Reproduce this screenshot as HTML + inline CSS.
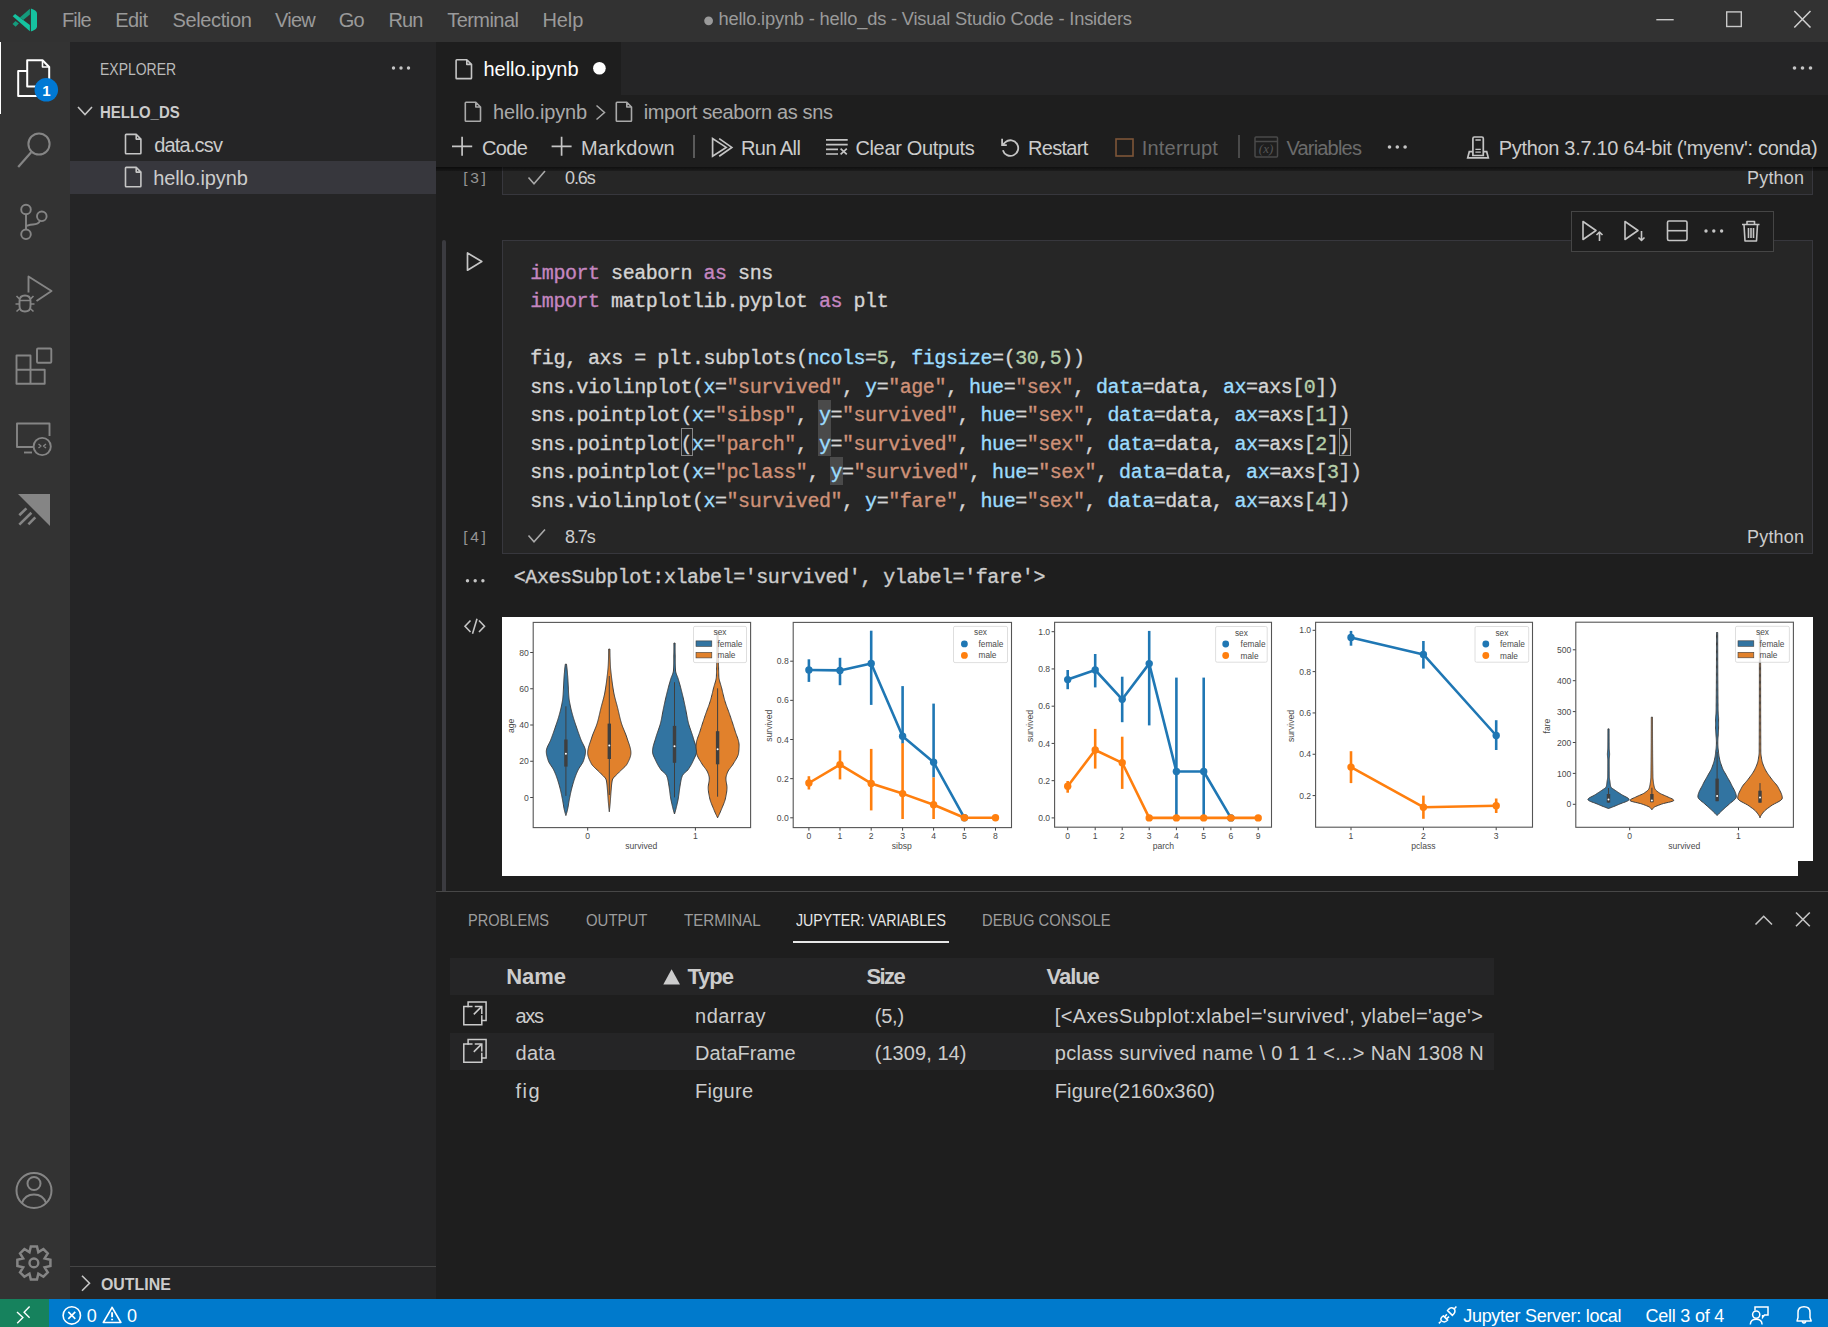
<!DOCTYPE html>
<html><head><meta charset="utf-8">
<style>
*{margin:0;padding:0;box-sizing:border-box}
html,body{width:1828px;height:1327px;overflow:hidden;background:#1e1e1e;font-family:"Liberation Sans",sans-serif;color:#ccc;position:relative}
.a{position:absolute}
.t{position:absolute;white-space:pre;line-height:1}
svg{position:absolute;overflow:visible}
</style></head><body>
<div class="a" style="left:0px;top:0px;width:1828px;height:42px;background:#323232;"></div>
<div class="a" style="left:0px;top:42px;width:70px;height:1257px;background:#333333;"></div>
<div class="a" style="left:70px;top:42px;width:366px;height:1257px;background:#252526;"></div>
<div class="a" style="left:436px;top:42px;width:1392px;height:53px;background:#252526;"></div>
<div class="a" style="left:436px;top:42px;width:185px;height:53px;background:#1e1e1e;"></div>
<div class="a" style="left:436px;top:95px;width:1392px;height:1204px;background:#1e1e1e;"></div>
<div class="a" style="left:0px;top:1299px;width:1828px;height:28px;background:#007acc;"></div>
<div class="a" style="left:0px;top:1299px;width:49px;height:28px;background:#16825d;"></div>
<svg style="left:0;top:0" width="60" height="42" viewBox="0 0 60 42">
<path d="M30.9 8.6 L33.8 9.7 Q37 11.2 37 13.8 L37 26.2 Q37 28.8 33.8 30.3 L30.9 31.5 Z" fill="#15c2a0"/>
<path d="M12.7 16.3 L15.1 13.9 L29.9 25.1 L29.9 31.3 Z" fill="#15c2a0"/>
<path d="M19.8 17.6 L29.9 8.8 L29.9 14.4 L23.2 20 Z" fill="#159a7c"/>
<path d="M12.5 23.9 L15.5 21.1 L18.9 23.6 L15.6 26.7 Z" fill="#159a7c"/>
</svg>
<svg style="left:0;top:0" width="1828" height="42"><circle cx="708.6" cy="20.8" r="4.4" fill="#9a9a9a"/></svg>
<svg style="left:1640px;top:0" width="188" height="42">
<line x1="16.3" y1="19.7" x2="33.7" y2="19.7" stroke="#c8c8c8" stroke-width="1.4"/>
<rect x="86.7" y="11.9" width="14.6" height="14.6" fill="none" stroke="#c8c8c8" stroke-width="1.4"/>
<path d="M154.3 11 L170.5 27.5 M170.5 11 L154.3 27.5" stroke="#d0d0d0" stroke-width="1.5"/>
</svg>
<div class="a" style="left:0px;top:42px;width:1.2px;height:72px;background:#ffffff;"></div>
<svg style="left:0;top:42px" width="70" height="1257" viewBox="0 42 70 1257" fill="none" stroke-linejoin="round">
<!-- files -->
<path d="M27.2 60.2 L42.5 60.2 L49.2 67 L49.2 86.5 L27.2 86.5 Z" stroke="#ffffff" stroke-width="2"/>
<path d="M42.5 60.2 L42.5 67 L49.2 67" stroke="#ffffff" stroke-width="1.6"/>
<path d="M27.2 71 L18.2 71 L18.2 96 L37 96 L37 86.5" stroke="#ffffff" stroke-width="2"/>
<circle cx="46.3" cy="89.8" r="11.8" fill="#0078d4" stroke="none"/>
<!-- search -->
<circle cx="39" cy="144" r="10.6" stroke="#858585" stroke-width="2"/>
<line x1="31.2" y1="152.2" x2="18.2" y2="167" stroke="#858585" stroke-width="2.2"/>
<!-- source control -->
<circle cx="26" cy="209.5" r="4.8" stroke="#858585" stroke-width="1.9"/>
<circle cx="26" cy="234.3" r="4.8" stroke="#858585" stroke-width="1.9"/>
<circle cx="41.8" cy="216.3" r="4.8" stroke="#858585" stroke-width="1.9"/>
<path d="M26 214.3 L26 229.5" stroke="#858585" stroke-width="1.9"/>
<path d="M26 226.5 Q27 225 33 224.5 Q38.5 224 40 220.8" stroke="#858585" stroke-width="1.9"/>
<!-- run & debug -->
<path d="M28.5 292.5 L28.5 276.5 L51.5 291 L36.5 301" stroke="#858585" stroke-width="1.9"/>
<path d="M19.5 301 Q19.5 295.5 25 295.5 Q30.5 295.5 30.5 301 L30.5 306 Q30.5 311.5 25 311.5 Q19.5 311.5 19.5 306 Z" stroke="#858585" stroke-width="1.9"/>
<path d="M19.5 300.5 L30.5 300.5 M16.5 296 L19.5 299 M33.5 296 L30.5 299 M15.5 304 L19.5 304 M34.5 304 L30.5 304 M16.5 311.5 L19.8 308.5 M33.5 311.5 L30.2 308.5" stroke="#858585" stroke-width="1.6"/>
<!-- extensions -->
<path d="M16.5 355.5 L30.5 355.5 L30.5 369.7 L44.7 369.7 L44.7 383.7 L16.5 383.7 Z M16.5 369.7 L30.5 369.7 L30.5 383.7" stroke="#858585" stroke-width="1.9"/>
<rect x="37" y="348.5" width="14.3" height="14.3" rx="1" stroke="#858585" stroke-width="1.9"/>
<!-- remote explorer -->
<path d="M33 447 L17 447 L17 423.5 L49.5 423.5 L49.5 436" stroke="#858585" stroke-width="1.9"/>
<path d="M24 452.5 L32 452.5" stroke="#858585" stroke-width="1.9"/>
<circle cx="42.2" cy="446.5" r="8.6" stroke="#858585" stroke-width="1.9"/>
<path d="M38.5 444 L41 446 L38.5 448 M46 444 L43.5 446 L46 448" stroke="#858585" stroke-width="1.3"/>
<!-- jupyter/other -->
<path d="M18 494 L50 494 L50 526 Z" fill="#858585" stroke="none"/>
<path d="M19.3 515.3 L26.4 508.4 M19.3 524.6 L31.4 512.7 M28.4 524.3 L35.3 517.4" stroke="#858585" stroke-width="2.6"/>
<!-- accounts -->
<circle cx="34" cy="1190.5" r="17.5" stroke="#858585" stroke-width="2"/>
<circle cx="34" cy="1183.5" r="6.5" stroke="#858585" stroke-width="2"/>
<path d="M22 1203 Q25 1194.5 34 1194.5 Q43 1194.5 46 1203" stroke="#858585" stroke-width="2"/>
<!-- settings gear -->
<g transform="translate(34 1263)">
<path d="M-3.2 -17.5 L3.2 -17.5 L4.2 -12.8 L7.9 -11.2 L12 -13.8 L16.5 -9.3 L13.8 -5.2 L15.3 -1.5 L17.5 -0.2 L17.5 5.5 L13.3 6.5 L11.6 10.3 L14.2 14.4 L9.6 18.9 L5.5 16.3 L1.8 17.8 L0.8 22 L-5.5 22" stroke="none"/>
</g>
</svg>
<svg style="left:0;top:0" width="70" height="1327"><path d="M30.84 1246.38 L36.96 1246.38 L38.34 1252.18 L43.42 1249.05 L47.75 1253.38 L44.62 1258.46 L50.42 1259.84 L50.42 1265.96 L44.62 1267.34 L47.75 1272.42 L43.42 1276.75 L38.34 1273.62 L36.96 1279.42 L30.84 1279.42 L29.46 1273.62 L24.38 1276.75 L20.05 1272.42 L23.18 1267.34 L17.38 1265.96 L17.38 1259.84 L23.18 1258.46 L20.05 1253.38 L24.38 1249.05 L29.46 1252.18 Z" fill="none" stroke="#858585" stroke-width="2.5" stroke-linejoin="miter"/><circle cx="33.9" cy="1262.9" r="4.4" fill="none" stroke="#858585" stroke-width="2.4"/></svg>
<svg style="left:0;top:0" width="436" height="1327" fill="#c5c5c5"><circle cx="393.5" cy="68" r="1.7"/><circle cx="401" cy="68" r="1.7"/><circle cx="408.5" cy="68" r="1.7"/></svg>
<svg style="left:0;top:0" width="436" height="1327" fill="none" stroke="#c5c5c5" stroke-width="1.6"><path d="M78 107 L85 114.5 L92 107"/></svg>
<div class="a" style="left:70px;top:161px;width:366px;height:33px;background:#37373d;"></div>
<svg style="left:0;top:0" width="1828" height="1327" fill="none" stroke="#c5c5c5" stroke-width="1.6" stroke-linejoin="round"><path d="M126.2 134.4 L136.2 134.4 L140.89999999999998 139.1 L140.89999999999998 153.1 Q140.89999999999998 153.79999999999998 140.2 153.79999999999998 L126.2 153.79999999999998 Q125.5 153.79999999999998 125.5 153.1 L125.5 135.1 Q125.5 134.4 126.2 134.4 Z M136.2 134.4 L136.2 139.1 L140.89999999999998 139.1"/></svg>
<svg style="left:0;top:0" width="1828" height="1327" fill="none" stroke="#c5c5c5" stroke-width="1.6" stroke-linejoin="round"><path d="M126.2 167.4 L136.2 167.4 L140.89999999999998 172.1 L140.89999999999998 186.1 Q140.89999999999998 186.79999999999998 140.2 186.79999999999998 L126.2 186.79999999999998 Q125.5 186.79999999999998 125.5 186.1 L125.5 168.1 Q125.5 167.4 126.2 167.4 Z M136.2 167.4 L136.2 172.1 L140.89999999999998 172.1"/></svg>
<div class="a" style="left:70px;top:1266px;width:366px;height:1px;background:#454545;"></div>
<svg style="left:0;top:0" width="436" height="1327" fill="none" stroke="#c5c5c5" stroke-width="1.6"><path d="M82 1275.7 L89.5 1283.2 L82 1290.7"/></svg>
<svg style="left:0;top:0" width="1828" height="1327" fill="none" stroke="#c5c5c5" stroke-width="1.6" stroke-linejoin="round"><path d="M456.8 59.699999999999996 L466.8 59.699999999999996 L471.5 64.4 L471.5 77.9 Q471.5 78.60000000000001 470.8 78.60000000000001 L456.8 78.60000000000001 Q456.1 78.60000000000001 456.1 77.9 L456.1 60.4 Q456.1 59.699999999999996 456.8 59.699999999999996 Z M466.8 59.699999999999996 L466.8 64.4 L471.5 64.4"/></svg>
<svg style="left:0;top:0" width="1828" height="100"><circle cx="599.4" cy="68.2" r="6.3" fill="#ffffff"/></svg>
<svg style="left:0;top:0" width="1828" height="100" fill="#c5c5c5"><circle cx="1794.5" cy="68" r="1.8"/><circle cx="1802.5" cy="68" r="1.8"/><circle cx="1810.5" cy="68" r="1.8"/></svg>
<svg style="left:0;top:0" width="1828" height="1327" fill="none" stroke="#a9a9a9" stroke-width="1.6" stroke-linejoin="round"><path d="M466.0 102.3 L475.8 102.3 L480.5 107.0 L480.5 120.5 Q480.5 121.2 479.8 121.2 L466.0 121.2 Q465.3 121.2 465.3 120.5 L465.3 103.0 Q465.3 102.3 466.0 102.3 Z M475.8 102.3 L475.8 107.0 L480.5 107.0"/></svg>
<svg style="left:0;top:0" width="1828" height="200" fill="none" stroke="#a9a9a9" stroke-width="1.5"><path d="M596.5 105.5 L604.5 112.5 L596.5 119.5"/></svg>
<svg style="left:0;top:0" width="1828" height="1327" fill="none" stroke="#a9a9a9" stroke-width="1.6" stroke-linejoin="round"><path d="M617.0 102.3 L626.8 102.3 L631.5 107.0 L631.5 120.5 Q631.5 121.2 630.8 121.2 L617.0 121.2 Q616.3 121.2 616.3 120.5 L616.3 103.0 Q616.3 102.3 617.0 102.3 Z M626.8 102.3 L626.8 107.0 L631.5 107.0"/></svg>
<svg style="left:0;top:0" width="1828" height="200" fill="none" stroke="#c5c5c5" stroke-width="1.7">
<path d="M452 146.3 L472.2 146.3 M462.1 136.8 L462.1 155.7"/>
<path d="M551.6 146.3 L571.6 146.3 M561.6 136.8 L561.6 155.7"/>
<path d="M712.6 138.6 L712.6 156.2 L726.2 147.4 Z" stroke-linejoin="miter"/>
<path d="M719.2 138.6 L731.8 147.4 L719.2 156.2"/>
<path d="M826 139.8 L847.7 139.8 M826 144.6 L847.7 144.6 M826 149.3 L838 149.3 M826 154 L838 154 M840.6 148.6 L846.8 154.4 M846.8 148.6 L840.6 154.4"/>
<path d="M1002.9 150.2 A7.8 7.8 0 1 0 1005.4 142.1" stroke-width="1.8"/>
<path d="M1002.1 138.8 L1002.1 145.1 L1006.8 145.1 M1002.4 144.8 L1005.8 141.8" stroke-width="1.8"/>
</svg>
<div class="a" style="left:693.3px;top:135px;width:1.3px;height:23px;background:#5a5a5a;"></div>
<svg style="left:0;top:0" width="1828" height="200" fill="none"><rect x="1116" y="139" width="17" height="17" stroke="#7d5538" stroke-width="1.6"/></svg>
<div class="a" style="left:1238.3px;top:135px;width:1.3px;height:23px;background:#4a4a4a;"></div>
<svg style="left:0;top:0" width="1828" height="200" fill="none" stroke="#4a4a4a" stroke-width="1.5">
<rect x="1255" y="137" width="22.5" height="20" rx="1"/><path d="M1255 141.5 L1277.5 141.5"/>
</svg>
<svg style="left:0;top:0" width="1828" height="200" fill="#c5c5c5"><circle cx="1389.5" cy="147" r="1.8"/><circle cx="1397.3" cy="147" r="1.8"/><circle cx="1405.1" cy="147" r="1.8"/></svg>
<svg style="left:0;top:0" width="1828" height="200" fill="none" stroke="#c5c5c5" stroke-width="1.6">
<path d="M1472.9 155.5 L1472.9 138.4 Q1472.9 137 1474.3 137 L1481.9 137 Q1483.3 137 1483.3 138.4 L1483.3 155.5 Z" stroke-width="1.7"/><path d="M1475.4 140 L1480.8 140 M1475.4 149.3 L1480.8 149.3 M1475.4 152.2 L1480.8 152.2" stroke-width="1.3"/><path d="M1472.9 151.7 L1469.3 151.7 L1467.7 157.8 L1488.3 157.8 L1486.7 151.7 L1483.3 151.7" stroke-width="1.7"/>
</svg>
<div class="a" style="left:502px;top:167px;width:1311px;height:28px;background:#262626;"></div>
<div class="a" style="left:502px;top:167px;width:1px;height:28px;background:#37373d;"></div>
<div class="a" style="left:502px;top:194px;width:1311px;height:1px;background:#37373d;"></div>
<div class="a" style="left:1812px;top:167px;width:1px;height:28px;background:#37373d;"></div>
<div class="a" style="left:442px;top:240px;width:4px;height:651px;background:#3b3b40;border-radius:2px 2px 0 0"></div>
<div class="a" style="left:502px;top:240px;width:1311px;height:314px;background:#262626;"></div>
<div class="a" style="left:502px;top:240px;width:1311px;height:1px;background:#37373d;"></div>
<div class="a" style="left:502px;top:240px;width:1px;height:314px;background:#37373d;"></div>
<div class="a" style="left:1812px;top:240px;width:1px;height:314px;background:#37373d;"></div>
<div class="a" style="left:502px;top:553px;width:1311px;height:1px;background:#37373d;"></div>
<svg style="left:0;top:0" width="1828" height="600" fill="none" stroke="#a9a9a9" stroke-width="1.6"><path d="M528.5 177.5 L534 183.8 L545 171"/><path d="M528.5 535.5 L534 541.8 L545 529.5"/></svg>
<svg style="left:0;top:0" width="1828" height="600" fill="none" stroke="#c5c5c5" stroke-width="1.7" stroke-linejoin="round"><path d="M467.5 253 L467.5 270.2 L481.8 261.6 Z"/></svg>
<div class="a" style="left:1570.5px;top:210.5px;width:203px;height:41px;background:#1e1e1e;border:1px solid #454545"></div>
<svg style="left:0;top:0" width="1828" height="600" fill="none" stroke="#c5c5c5" stroke-width="1.6" stroke-linejoin="round">
<path d="M1583 221.5 L1583 239.5 L1596 230.5 Z"/><path d="M1599.5 241 L1599.5 232 M1596.5 235 L1599.5 232 L1602.5 235"/>
<path d="M1625 221.5 L1625 239.5 L1638 230.5 Z"/><path d="M1641.5 231 L1641.5 240.5 M1638.5 237.5 L1641.5 240.5 L1644.5 237.5"/>
<rect x="1667.5" y="221" width="19.5" height="19.5" rx="1.5"/><path d="M1667.5 230.7 L1687 230.7"/>
<path d="M1744 224.5 L1757.5 224.5 M1742 224.5 L1759.5 224.5 M1747 224.5 L1747 221.5 L1754.5 221.5 L1754.5 224.5 M1744 224.5 L1745 241 L1756.5 241 L1757.5 224.5 M1748.5 228 L1748.5 238 M1751 228 L1751 238 M1753.5 228 L1753.5 238"/>
</svg>
<svg style="left:0;top:0" width="1828" height="600" fill="#c5c5c5"><circle cx="1706" cy="231" r="1.7"/><circle cx="1713.8" cy="231" r="1.7"/><circle cx="1721.6" cy="231" r="1.7"/></svg>
<div class="a" style="left:818.425px;top:399.7px;width:12.545px;height:28px;background:#4a4a4a;"></div>
<div class="a" style="left:818.425px;top:428.2px;width:12.545px;height:28px;background:#4a4a4a;"></div>
<div class="a" style="left:829.97px;top:456.7px;width:12.545px;height:28px;background:#4a4a4a;"></div>
<div class="a" style="left:680.885px;top:428.2px;width:12.545px;height:28px;background:transparent;border:1px solid #888888;"></div>
<div class="a" style="left:1338.9499999999998px;top:428.2px;width:12.545px;height:28px;background:transparent;border:1px solid #888888;"></div>
<div class="t" style="left:530.30px;top:263.50px;font-size:20px;font-family:'Liberation Mono';color:#c586c0;letter-spacing:-0.455px;-webkit-text-stroke:0.35px #c586c0">import</div>
<div class="t" style="left:599.57px;top:263.50px;font-size:20px;font-family:'Liberation Mono';color:#d4d4d4;letter-spacing:-0.455px;-webkit-text-stroke:0.35px #d4d4d4"> seaborn </div>
<div class="t" style="left:703.47px;top:263.50px;font-size:20px;font-family:'Liberation Mono';color:#c586c0;letter-spacing:-0.455px;-webkit-text-stroke:0.35px #c586c0">as</div>
<div class="t" style="left:726.56px;top:263.50px;font-size:20px;font-family:'Liberation Mono';color:#d4d4d4;letter-spacing:-0.455px;-webkit-text-stroke:0.35px #d4d4d4"> sns</div>
<div class="t" style="left:530.30px;top:292.00px;font-size:20px;font-family:'Liberation Mono';color:#c586c0;letter-spacing:-0.455px;-webkit-text-stroke:0.35px #c586c0">import</div>
<div class="t" style="left:599.57px;top:292.00px;font-size:20px;font-family:'Liberation Mono';color:#d4d4d4;letter-spacing:-0.455px;-webkit-text-stroke:0.35px #d4d4d4"> matplotlib.pyplot </div>
<div class="t" style="left:818.92px;top:292.00px;font-size:20px;font-family:'Liberation Mono';color:#c586c0;letter-spacing:-0.455px;-webkit-text-stroke:0.35px #c586c0">as</div>
<div class="t" style="left:842.01px;top:292.00px;font-size:20px;font-family:'Liberation Mono';color:#d4d4d4;letter-spacing:-0.455px;-webkit-text-stroke:0.35px #d4d4d4"> plt</div>
<div class="t" style="left:530.30px;top:349.00px;font-size:20px;font-family:'Liberation Mono';color:#d4d4d4;letter-spacing:-0.455px;-webkit-text-stroke:0.35px #d4d4d4">fig, axs = plt.subplots(</div>
<div class="t" style="left:807.38px;top:349.00px;font-size:20px;font-family:'Liberation Mono';color:#9cdcfe;letter-spacing:-0.455px;-webkit-text-stroke:0.35px #9cdcfe">ncols</div>
<div class="t" style="left:865.11px;top:349.00px;font-size:20px;font-family:'Liberation Mono';color:#d4d4d4;letter-spacing:-0.455px;-webkit-text-stroke:0.35px #d4d4d4">=</div>
<div class="t" style="left:876.65px;top:349.00px;font-size:20px;font-family:'Liberation Mono';color:#b5cea8;letter-spacing:-0.455px;-webkit-text-stroke:0.35px #b5cea8">5</div>
<div class="t" style="left:888.19px;top:349.00px;font-size:20px;font-family:'Liberation Mono';color:#d4d4d4;letter-spacing:-0.455px;-webkit-text-stroke:0.35px #d4d4d4">, </div>
<div class="t" style="left:911.28px;top:349.00px;font-size:20px;font-family:'Liberation Mono';color:#9cdcfe;letter-spacing:-0.455px;-webkit-text-stroke:0.35px #9cdcfe">figsize</div>
<div class="t" style="left:992.10px;top:349.00px;font-size:20px;font-family:'Liberation Mono';color:#d4d4d4;letter-spacing:-0.455px;-webkit-text-stroke:0.35px #d4d4d4">=(</div>
<div class="t" style="left:1015.19px;top:349.00px;font-size:20px;font-family:'Liberation Mono';color:#b5cea8;letter-spacing:-0.455px;-webkit-text-stroke:0.35px #b5cea8">30</div>
<div class="t" style="left:1038.28px;top:349.00px;font-size:20px;font-family:'Liberation Mono';color:#d4d4d4;letter-spacing:-0.455px;-webkit-text-stroke:0.35px #d4d4d4">,</div>
<div class="t" style="left:1049.82px;top:349.00px;font-size:20px;font-family:'Liberation Mono';color:#b5cea8;letter-spacing:-0.455px;-webkit-text-stroke:0.35px #b5cea8">5</div>
<div class="t" style="left:1061.37px;top:349.00px;font-size:20px;font-family:'Liberation Mono';color:#d4d4d4;letter-spacing:-0.455px;-webkit-text-stroke:0.35px #d4d4d4">))</div>
<div class="t" style="left:530.30px;top:377.50px;font-size:20px;font-family:'Liberation Mono';color:#d4d4d4;letter-spacing:-0.455px;-webkit-text-stroke:0.35px #d4d4d4">sns.violinplot(</div>
<div class="t" style="left:703.47px;top:377.50px;font-size:20px;font-family:'Liberation Mono';color:#9cdcfe;letter-spacing:-0.455px;-webkit-text-stroke:0.35px #9cdcfe">x</div>
<div class="t" style="left:715.02px;top:377.50px;font-size:20px;font-family:'Liberation Mono';color:#d4d4d4;letter-spacing:-0.455px;-webkit-text-stroke:0.35px #d4d4d4">=</div>
<div class="t" style="left:726.56px;top:377.50px;font-size:20px;font-family:'Liberation Mono';color:#ce9178;letter-spacing:-0.455px;-webkit-text-stroke:0.35px #ce9178">"survived"</div>
<div class="t" style="left:842.01px;top:377.50px;font-size:20px;font-family:'Liberation Mono';color:#d4d4d4;letter-spacing:-0.455px;-webkit-text-stroke:0.35px #d4d4d4">, </div>
<div class="t" style="left:865.11px;top:377.50px;font-size:20px;font-family:'Liberation Mono';color:#9cdcfe;letter-spacing:-0.455px;-webkit-text-stroke:0.35px #9cdcfe">y</div>
<div class="t" style="left:876.65px;top:377.50px;font-size:20px;font-family:'Liberation Mono';color:#d4d4d4;letter-spacing:-0.455px;-webkit-text-stroke:0.35px #d4d4d4">=</div>
<div class="t" style="left:888.19px;top:377.50px;font-size:20px;font-family:'Liberation Mono';color:#ce9178;letter-spacing:-0.455px;-webkit-text-stroke:0.35px #ce9178">"age"</div>
<div class="t" style="left:945.92px;top:377.50px;font-size:20px;font-family:'Liberation Mono';color:#d4d4d4;letter-spacing:-0.455px;-webkit-text-stroke:0.35px #d4d4d4">, </div>
<div class="t" style="left:969.01px;top:377.50px;font-size:20px;font-family:'Liberation Mono';color:#9cdcfe;letter-spacing:-0.455px;-webkit-text-stroke:0.35px #9cdcfe">hue</div>
<div class="t" style="left:1003.64px;top:377.50px;font-size:20px;font-family:'Liberation Mono';color:#d4d4d4;letter-spacing:-0.455px;-webkit-text-stroke:0.35px #d4d4d4">=</div>
<div class="t" style="left:1015.19px;top:377.50px;font-size:20px;font-family:'Liberation Mono';color:#ce9178;letter-spacing:-0.455px;-webkit-text-stroke:0.35px #ce9178">"sex"</div>
<div class="t" style="left:1072.91px;top:377.50px;font-size:20px;font-family:'Liberation Mono';color:#d4d4d4;letter-spacing:-0.455px;-webkit-text-stroke:0.35px #d4d4d4">, </div>
<div class="t" style="left:1096.01px;top:377.50px;font-size:20px;font-family:'Liberation Mono';color:#9cdcfe;letter-spacing:-0.455px;-webkit-text-stroke:0.35px #9cdcfe">data</div>
<div class="t" style="left:1142.18px;top:377.50px;font-size:20px;font-family:'Liberation Mono';color:#d4d4d4;letter-spacing:-0.455px;-webkit-text-stroke:0.35px #d4d4d4">=data, </div>
<div class="t" style="left:1223.00px;top:377.50px;font-size:20px;font-family:'Liberation Mono';color:#9cdcfe;letter-spacing:-0.455px;-webkit-text-stroke:0.35px #9cdcfe">ax</div>
<div class="t" style="left:1246.09px;top:377.50px;font-size:20px;font-family:'Liberation Mono';color:#d4d4d4;letter-spacing:-0.455px;-webkit-text-stroke:0.35px #d4d4d4">=axs[</div>
<div class="t" style="left:1303.82px;top:377.50px;font-size:20px;font-family:'Liberation Mono';color:#b5cea8;letter-spacing:-0.455px;-webkit-text-stroke:0.35px #b5cea8">0</div>
<div class="t" style="left:1315.36px;top:377.50px;font-size:20px;font-family:'Liberation Mono';color:#d4d4d4;letter-spacing:-0.455px;-webkit-text-stroke:0.35px #d4d4d4">])</div>
<div class="t" style="left:530.30px;top:406.00px;font-size:20px;font-family:'Liberation Mono';color:#d4d4d4;letter-spacing:-0.455px;-webkit-text-stroke:0.35px #d4d4d4">sns.pointplot(</div>
<div class="t" style="left:691.93px;top:406.00px;font-size:20px;font-family:'Liberation Mono';color:#9cdcfe;letter-spacing:-0.455px;-webkit-text-stroke:0.35px #9cdcfe">x</div>
<div class="t" style="left:703.47px;top:406.00px;font-size:20px;font-family:'Liberation Mono';color:#d4d4d4;letter-spacing:-0.455px;-webkit-text-stroke:0.35px #d4d4d4">=</div>
<div class="t" style="left:715.02px;top:406.00px;font-size:20px;font-family:'Liberation Mono';color:#ce9178;letter-spacing:-0.455px;-webkit-text-stroke:0.35px #ce9178">"sibsp"</div>
<div class="t" style="left:795.84px;top:406.00px;font-size:20px;font-family:'Liberation Mono';color:#d4d4d4;letter-spacing:-0.455px;-webkit-text-stroke:0.35px #d4d4d4">, </div>
<div class="t" style="left:818.92px;top:406.00px;font-size:20px;font-family:'Liberation Mono';color:#9cdcfe;letter-spacing:-0.455px;-webkit-text-stroke:0.35px #9cdcfe">y</div>
<div class="t" style="left:830.47px;top:406.00px;font-size:20px;font-family:'Liberation Mono';color:#d4d4d4;letter-spacing:-0.455px;-webkit-text-stroke:0.35px #d4d4d4">=</div>
<div class="t" style="left:842.01px;top:406.00px;font-size:20px;font-family:'Liberation Mono';color:#ce9178;letter-spacing:-0.455px;-webkit-text-stroke:0.35px #ce9178">"survived"</div>
<div class="t" style="left:957.46px;top:406.00px;font-size:20px;font-family:'Liberation Mono';color:#d4d4d4;letter-spacing:-0.455px;-webkit-text-stroke:0.35px #d4d4d4">, </div>
<div class="t" style="left:980.55px;top:406.00px;font-size:20px;font-family:'Liberation Mono';color:#9cdcfe;letter-spacing:-0.455px;-webkit-text-stroke:0.35px #9cdcfe">hue</div>
<div class="t" style="left:1015.19px;top:406.00px;font-size:20px;font-family:'Liberation Mono';color:#d4d4d4;letter-spacing:-0.455px;-webkit-text-stroke:0.35px #d4d4d4">=</div>
<div class="t" style="left:1026.73px;top:406.00px;font-size:20px;font-family:'Liberation Mono';color:#ce9178;letter-spacing:-0.455px;-webkit-text-stroke:0.35px #ce9178">"sex"</div>
<div class="t" style="left:1084.46px;top:406.00px;font-size:20px;font-family:'Liberation Mono';color:#d4d4d4;letter-spacing:-0.455px;-webkit-text-stroke:0.35px #d4d4d4">, </div>
<div class="t" style="left:1107.55px;top:406.00px;font-size:20px;font-family:'Liberation Mono';color:#9cdcfe;letter-spacing:-0.455px;-webkit-text-stroke:0.35px #9cdcfe">data</div>
<div class="t" style="left:1153.73px;top:406.00px;font-size:20px;font-family:'Liberation Mono';color:#d4d4d4;letter-spacing:-0.455px;-webkit-text-stroke:0.35px #d4d4d4">=data, </div>
<div class="t" style="left:1234.55px;top:406.00px;font-size:20px;font-family:'Liberation Mono';color:#9cdcfe;letter-spacing:-0.455px;-webkit-text-stroke:0.35px #9cdcfe">ax</div>
<div class="t" style="left:1257.63px;top:406.00px;font-size:20px;font-family:'Liberation Mono';color:#d4d4d4;letter-spacing:-0.455px;-webkit-text-stroke:0.35px #d4d4d4">=axs[</div>
<div class="t" style="left:1315.36px;top:406.00px;font-size:20px;font-family:'Liberation Mono';color:#b5cea8;letter-spacing:-0.455px;-webkit-text-stroke:0.35px #b5cea8">1</div>
<div class="t" style="left:1326.90px;top:406.00px;font-size:20px;font-family:'Liberation Mono';color:#d4d4d4;letter-spacing:-0.455px;-webkit-text-stroke:0.35px #d4d4d4">])</div>
<div class="t" style="left:530.30px;top:434.50px;font-size:20px;font-family:'Liberation Mono';color:#d4d4d4;letter-spacing:-0.455px;-webkit-text-stroke:0.35px #d4d4d4">sns.pointplot(</div>
<div class="t" style="left:691.93px;top:434.50px;font-size:20px;font-family:'Liberation Mono';color:#9cdcfe;letter-spacing:-0.455px;-webkit-text-stroke:0.35px #9cdcfe">x</div>
<div class="t" style="left:703.47px;top:434.50px;font-size:20px;font-family:'Liberation Mono';color:#d4d4d4;letter-spacing:-0.455px;-webkit-text-stroke:0.35px #d4d4d4">=</div>
<div class="t" style="left:715.02px;top:434.50px;font-size:20px;font-family:'Liberation Mono';color:#ce9178;letter-spacing:-0.455px;-webkit-text-stroke:0.35px #ce9178">"parch"</div>
<div class="t" style="left:795.84px;top:434.50px;font-size:20px;font-family:'Liberation Mono';color:#d4d4d4;letter-spacing:-0.455px;-webkit-text-stroke:0.35px #d4d4d4">, </div>
<div class="t" style="left:818.92px;top:434.50px;font-size:20px;font-family:'Liberation Mono';color:#9cdcfe;letter-spacing:-0.455px;-webkit-text-stroke:0.35px #9cdcfe">y</div>
<div class="t" style="left:830.47px;top:434.50px;font-size:20px;font-family:'Liberation Mono';color:#d4d4d4;letter-spacing:-0.455px;-webkit-text-stroke:0.35px #d4d4d4">=</div>
<div class="t" style="left:842.01px;top:434.50px;font-size:20px;font-family:'Liberation Mono';color:#ce9178;letter-spacing:-0.455px;-webkit-text-stroke:0.35px #ce9178">"survived"</div>
<div class="t" style="left:957.46px;top:434.50px;font-size:20px;font-family:'Liberation Mono';color:#d4d4d4;letter-spacing:-0.455px;-webkit-text-stroke:0.35px #d4d4d4">, </div>
<div class="t" style="left:980.55px;top:434.50px;font-size:20px;font-family:'Liberation Mono';color:#9cdcfe;letter-spacing:-0.455px;-webkit-text-stroke:0.35px #9cdcfe">hue</div>
<div class="t" style="left:1015.19px;top:434.50px;font-size:20px;font-family:'Liberation Mono';color:#d4d4d4;letter-spacing:-0.455px;-webkit-text-stroke:0.35px #d4d4d4">=</div>
<div class="t" style="left:1026.73px;top:434.50px;font-size:20px;font-family:'Liberation Mono';color:#ce9178;letter-spacing:-0.455px;-webkit-text-stroke:0.35px #ce9178">"sex"</div>
<div class="t" style="left:1084.46px;top:434.50px;font-size:20px;font-family:'Liberation Mono';color:#d4d4d4;letter-spacing:-0.455px;-webkit-text-stroke:0.35px #d4d4d4">, </div>
<div class="t" style="left:1107.55px;top:434.50px;font-size:20px;font-family:'Liberation Mono';color:#9cdcfe;letter-spacing:-0.455px;-webkit-text-stroke:0.35px #9cdcfe">data</div>
<div class="t" style="left:1153.73px;top:434.50px;font-size:20px;font-family:'Liberation Mono';color:#d4d4d4;letter-spacing:-0.455px;-webkit-text-stroke:0.35px #d4d4d4">=data, </div>
<div class="t" style="left:1234.55px;top:434.50px;font-size:20px;font-family:'Liberation Mono';color:#9cdcfe;letter-spacing:-0.455px;-webkit-text-stroke:0.35px #9cdcfe">ax</div>
<div class="t" style="left:1257.63px;top:434.50px;font-size:20px;font-family:'Liberation Mono';color:#d4d4d4;letter-spacing:-0.455px;-webkit-text-stroke:0.35px #d4d4d4">=axs[</div>
<div class="t" style="left:1315.36px;top:434.50px;font-size:20px;font-family:'Liberation Mono';color:#b5cea8;letter-spacing:-0.455px;-webkit-text-stroke:0.35px #b5cea8">2</div>
<div class="t" style="left:1326.90px;top:434.50px;font-size:20px;font-family:'Liberation Mono';color:#d4d4d4;letter-spacing:-0.455px;-webkit-text-stroke:0.35px #d4d4d4">])</div>
<div class="t" style="left:530.30px;top:463.00px;font-size:20px;font-family:'Liberation Mono';color:#d4d4d4;letter-spacing:-0.455px;-webkit-text-stroke:0.35px #d4d4d4">sns.pointplot(</div>
<div class="t" style="left:691.93px;top:463.00px;font-size:20px;font-family:'Liberation Mono';color:#9cdcfe;letter-spacing:-0.455px;-webkit-text-stroke:0.35px #9cdcfe">x</div>
<div class="t" style="left:703.47px;top:463.00px;font-size:20px;font-family:'Liberation Mono';color:#d4d4d4;letter-spacing:-0.455px;-webkit-text-stroke:0.35px #d4d4d4">=</div>
<div class="t" style="left:715.02px;top:463.00px;font-size:20px;font-family:'Liberation Mono';color:#ce9178;letter-spacing:-0.455px;-webkit-text-stroke:0.35px #ce9178">"pclass"</div>
<div class="t" style="left:807.38px;top:463.00px;font-size:20px;font-family:'Liberation Mono';color:#d4d4d4;letter-spacing:-0.455px;-webkit-text-stroke:0.35px #d4d4d4">, </div>
<div class="t" style="left:830.47px;top:463.00px;font-size:20px;font-family:'Liberation Mono';color:#9cdcfe;letter-spacing:-0.455px;-webkit-text-stroke:0.35px #9cdcfe">y</div>
<div class="t" style="left:842.01px;top:463.00px;font-size:20px;font-family:'Liberation Mono';color:#d4d4d4;letter-spacing:-0.455px;-webkit-text-stroke:0.35px #d4d4d4">=</div>
<div class="t" style="left:853.56px;top:463.00px;font-size:20px;font-family:'Liberation Mono';color:#ce9178;letter-spacing:-0.455px;-webkit-text-stroke:0.35px #ce9178">"survived"</div>
<div class="t" style="left:969.01px;top:463.00px;font-size:20px;font-family:'Liberation Mono';color:#d4d4d4;letter-spacing:-0.455px;-webkit-text-stroke:0.35px #d4d4d4">, </div>
<div class="t" style="left:992.10px;top:463.00px;font-size:20px;font-family:'Liberation Mono';color:#9cdcfe;letter-spacing:-0.455px;-webkit-text-stroke:0.35px #9cdcfe">hue</div>
<div class="t" style="left:1026.73px;top:463.00px;font-size:20px;font-family:'Liberation Mono';color:#d4d4d4;letter-spacing:-0.455px;-webkit-text-stroke:0.35px #d4d4d4">=</div>
<div class="t" style="left:1038.28px;top:463.00px;font-size:20px;font-family:'Liberation Mono';color:#ce9178;letter-spacing:-0.455px;-webkit-text-stroke:0.35px #ce9178">"sex"</div>
<div class="t" style="left:1096.01px;top:463.00px;font-size:20px;font-family:'Liberation Mono';color:#d4d4d4;letter-spacing:-0.455px;-webkit-text-stroke:0.35px #d4d4d4">, </div>
<div class="t" style="left:1119.09px;top:463.00px;font-size:20px;font-family:'Liberation Mono';color:#9cdcfe;letter-spacing:-0.455px;-webkit-text-stroke:0.35px #9cdcfe">data</div>
<div class="t" style="left:1165.28px;top:463.00px;font-size:20px;font-family:'Liberation Mono';color:#d4d4d4;letter-spacing:-0.455px;-webkit-text-stroke:0.35px #d4d4d4">=data, </div>
<div class="t" style="left:1246.09px;top:463.00px;font-size:20px;font-family:'Liberation Mono';color:#9cdcfe;letter-spacing:-0.455px;-webkit-text-stroke:0.35px #9cdcfe">ax</div>
<div class="t" style="left:1269.18px;top:463.00px;font-size:20px;font-family:'Liberation Mono';color:#d4d4d4;letter-spacing:-0.455px;-webkit-text-stroke:0.35px #d4d4d4">=axs[</div>
<div class="t" style="left:1326.90px;top:463.00px;font-size:20px;font-family:'Liberation Mono';color:#b5cea8;letter-spacing:-0.455px;-webkit-text-stroke:0.35px #b5cea8">3</div>
<div class="t" style="left:1338.45px;top:463.00px;font-size:20px;font-family:'Liberation Mono';color:#d4d4d4;letter-spacing:-0.455px;-webkit-text-stroke:0.35px #d4d4d4">])</div>
<div class="t" style="left:530.30px;top:491.50px;font-size:20px;font-family:'Liberation Mono';color:#d4d4d4;letter-spacing:-0.455px;-webkit-text-stroke:0.35px #d4d4d4">sns.violinplot(</div>
<div class="t" style="left:703.47px;top:491.50px;font-size:20px;font-family:'Liberation Mono';color:#9cdcfe;letter-spacing:-0.455px;-webkit-text-stroke:0.35px #9cdcfe">x</div>
<div class="t" style="left:715.02px;top:491.50px;font-size:20px;font-family:'Liberation Mono';color:#d4d4d4;letter-spacing:-0.455px;-webkit-text-stroke:0.35px #d4d4d4">=</div>
<div class="t" style="left:726.56px;top:491.50px;font-size:20px;font-family:'Liberation Mono';color:#ce9178;letter-spacing:-0.455px;-webkit-text-stroke:0.35px #ce9178">"survived"</div>
<div class="t" style="left:842.01px;top:491.50px;font-size:20px;font-family:'Liberation Mono';color:#d4d4d4;letter-spacing:-0.455px;-webkit-text-stroke:0.35px #d4d4d4">, </div>
<div class="t" style="left:865.11px;top:491.50px;font-size:20px;font-family:'Liberation Mono';color:#9cdcfe;letter-spacing:-0.455px;-webkit-text-stroke:0.35px #9cdcfe">y</div>
<div class="t" style="left:876.65px;top:491.50px;font-size:20px;font-family:'Liberation Mono';color:#d4d4d4;letter-spacing:-0.455px;-webkit-text-stroke:0.35px #d4d4d4">=</div>
<div class="t" style="left:888.19px;top:491.50px;font-size:20px;font-family:'Liberation Mono';color:#ce9178;letter-spacing:-0.455px;-webkit-text-stroke:0.35px #ce9178">"fare"</div>
<div class="t" style="left:957.46px;top:491.50px;font-size:20px;font-family:'Liberation Mono';color:#d4d4d4;letter-spacing:-0.455px;-webkit-text-stroke:0.35px #d4d4d4">, </div>
<div class="t" style="left:980.55px;top:491.50px;font-size:20px;font-family:'Liberation Mono';color:#9cdcfe;letter-spacing:-0.455px;-webkit-text-stroke:0.35px #9cdcfe">hue</div>
<div class="t" style="left:1015.19px;top:491.50px;font-size:20px;font-family:'Liberation Mono';color:#d4d4d4;letter-spacing:-0.455px;-webkit-text-stroke:0.35px #d4d4d4">=</div>
<div class="t" style="left:1026.73px;top:491.50px;font-size:20px;font-family:'Liberation Mono';color:#ce9178;letter-spacing:-0.455px;-webkit-text-stroke:0.35px #ce9178">"sex"</div>
<div class="t" style="left:1084.46px;top:491.50px;font-size:20px;font-family:'Liberation Mono';color:#d4d4d4;letter-spacing:-0.455px;-webkit-text-stroke:0.35px #d4d4d4">, </div>
<div class="t" style="left:1107.55px;top:491.50px;font-size:20px;font-family:'Liberation Mono';color:#9cdcfe;letter-spacing:-0.455px;-webkit-text-stroke:0.35px #9cdcfe">data</div>
<div class="t" style="left:1153.73px;top:491.50px;font-size:20px;font-family:'Liberation Mono';color:#d4d4d4;letter-spacing:-0.455px;-webkit-text-stroke:0.35px #d4d4d4">=data, </div>
<div class="t" style="left:1234.55px;top:491.50px;font-size:20px;font-family:'Liberation Mono';color:#9cdcfe;letter-spacing:-0.455px;-webkit-text-stroke:0.35px #9cdcfe">ax</div>
<div class="t" style="left:1257.63px;top:491.50px;font-size:20px;font-family:'Liberation Mono';color:#d4d4d4;letter-spacing:-0.455px;-webkit-text-stroke:0.35px #d4d4d4">=axs[</div>
<div class="t" style="left:1315.36px;top:491.50px;font-size:20px;font-family:'Liberation Mono';color:#b5cea8;letter-spacing:-0.455px;-webkit-text-stroke:0.35px #b5cea8">4</div>
<div class="t" style="left:1326.90px;top:491.50px;font-size:20px;font-family:'Liberation Mono';color:#d4d4d4;letter-spacing:-0.455px;-webkit-text-stroke:0.35px #d4d4d4">])</div>
<svg style="left:0;top:0" width="1828" height="700" fill="#c5c5c5"><circle cx="467.5" cy="580.8" r="1.7"/><circle cx="475.2" cy="580.8" r="1.7"/><circle cx="482.9" cy="580.8" r="1.7"/></svg>
<div class="t" style="left:513.80px;top:568.00px;font-size:20px;font-family:'Liberation Mono';color:#cccccc;letter-spacing:-0.455px;-webkit-text-stroke:0.35px #cccccc">&lt;AxesSubplot:xlabel='survived', ylabel='fare'&gt;</div>
<svg style="left:0;top:0" width="1828" height="700" fill="none" stroke="#c5c5c5" stroke-width="1.6"><path d="M470.5 620.5 L465 626.3 L470.5 632 M479 620.5 L484.5 626.3 L479 632 M477 618.7 L472.5 633.8"/></svg>
<div class="a" style="left:502px;top:617px;width:1311px;height:244px;background:#ffffff;"></div>
<div class="a" style="left:502px;top:861px;width:1296px;height:15px;background:#ffffff;"></div>
<div class="a" style="left:436px;top:167px;width:1392px;height:3.5px;background:linear-gradient(#00000099,#00000040);"></div>
<div class="a" style="left:436px;top:891px;width:1392px;height:1px;background:#474747;"></div>
<div class="a" style="left:793px;top:941px;width:156px;height:1.5px;background:#e7e7e7;"></div>
<svg style="left:0;top:0" width="1828" height="1327" fill="none" stroke="#c5c5c5" stroke-width="1.6"><path d="M1755.5 924.5 L1763.7 916.3 L1772 924.5"/><path d="M1796 912.5 L1809.8 926.3 M1809.8 912.5 L1796 926.3"/></svg>
<div class="a" style="left:450px;top:958px;width:1044px;height:37px;background:#252526;"></div>
<div class="a" style="left:450px;top:1033.3px;width:1044px;height:36.5px;background:#252526;"></div>
<svg style="left:0;top:0" width="1828" height="1327"><path d="M663.3 984.5 L671.6 969.3 L680 984.5 Z" fill="#cccccc"/></svg>
<svg style="left:0;top:0" width="1828" height="1327" fill="none" stroke="#cccccc" stroke-width="1.5" stroke-linecap="square"><path d="M468.1 1006.40 L468.1 1002.10 L486.1 1002.10 L486.1 1020.40 L481.8 1020.40"/><path d="M471.8 1006.60 L463.8 1006.60 L463.8 1024.70 L481.8 1024.70 L481.8 1016.10"/><path d="M475.5 1006.60 L481.8 1006.60 L481.8 1013.30"/><path d="M473.8 1014.40 L481.3 1006.90" stroke-linecap="butt"/></svg>
<svg style="left:0;top:0" width="1828" height="1327" fill="none" stroke="#cccccc" stroke-width="1.5" stroke-linecap="square"><path d="M468.1 1043.90 L468.1 1039.60 L486.1 1039.60 L486.1 1057.90 L481.8 1057.90"/><path d="M471.8 1044.10 L463.8 1044.10 L463.8 1062.20 L481.8 1062.20 L481.8 1053.60"/><path d="M475.5 1044.10 L481.8 1044.10 L481.8 1050.80"/><path d="M473.8 1051.90 L481.3 1044.40" stroke-linecap="butt"/></svg>
<svg style="left:0;top:0" width="1828" height="1327" fill="none" stroke="#ffffff" stroke-width="1.6">
<path d="M17 1312 L22.9 1317.6 L17.2 1323.3 M29.6 1306.5 L24.1 1312.2 L29.6 1317.7" stroke-width="1.4"/>
<circle cx="71.8" cy="1315.4" r="8.7"/><path d="M68.3 1311.9 L75.3 1318.9 M75.3 1311.9 L68.3 1318.9"/>
<path d="M112.1 1307.3 L103.3 1322.5 L120.9 1322.5 Z" stroke-linejoin="round"/><path d="M112.1 1312.3 L112.1 1317.3 M112.1 1318.8 L112.1 1320.2" stroke-width="1.9"/>
<path d="M1447.6 1310.6 L1452.4 1315.4 Q1455.8 1312.8 1454.7 1309.6 Q1452.5 1306.6 1449.6 1308.4 Z M1454.6 1308.6 L1456.4 1306.6" stroke-width="1.5"/><path d="M1443.4 1315.9 L1447.6 1320.1 Q1444.8 1323.3 1441.6 1321 Q1439.4 1318.4 1443.4 1315.9 Z M1444.6 1317.1 L1446.8 1314.2 M1446.4 1318.9 L1449.1 1316.6 M1440.8 1321.5 L1438.8 1323.4" stroke-width="1.5"/>
<path d="M1755 1310.5 L1755 1307.1 L1768 1307.1 L1768 1315 L1764.5 1315 L1762.6 1317.3 L1762.6 1315" stroke-width="1.5"/>
<circle cx="1756.2" cy="1314.6" r="3.6" stroke-width="1.5"/><path d="M1750.3 1324.5 Q1750.6 1319.3 1756.2 1319.3 Q1761.8 1319.3 1762.1 1324.5" stroke-width="1.5"/>
<path d="M1797 1321.1 L1798 1317.5 L1798 1312.5 Q1798 1306.8 1804 1306.8 Q1810 1306.8 1810 1312.5 L1810 1317.5 L1811.2 1321.1 Z M1802.2 1321.6 Q1804 1324.6 1805.8 1321.6" stroke-width="1.5" stroke-linejoin="round"/>
</svg>
<svg style="left:0;top:0" width="1828" height="900" font-family="Liberation Sans"><line x1="530.2" y1="652.5" x2="533.2" y2="652.5" stroke="#444" stroke-width="1"/><text x="528.7" y="655.6" text-anchor="end" font-size="8.6" fill="#4a4a4a">80</text><line x1="530.2" y1="688.75" x2="533.2" y2="688.75" stroke="#444" stroke-width="1"/><text x="528.7" y="691.85" text-anchor="end" font-size="8.6" fill="#4a4a4a">60</text><line x1="530.2" y1="725.0" x2="533.2" y2="725.0" stroke="#444" stroke-width="1"/><text x="528.7" y="728.1" text-anchor="end" font-size="8.6" fill="#4a4a4a">40</text><line x1="530.2" y1="761.25" x2="533.2" y2="761.25" stroke="#444" stroke-width="1"/><text x="528.7" y="764.35" text-anchor="end" font-size="8.6" fill="#4a4a4a">20</text><line x1="530.2" y1="797.5" x2="533.2" y2="797.5" stroke="#444" stroke-width="1"/><text x="528.7" y="800.6" text-anchor="end" font-size="8.6" fill="#4a4a4a">0</text><path d="M566.50 664.20 L566.61 665.15 L566.71 666.10 L566.82 667.05 L566.92 668.01 L567.02 668.96 L567.11 669.91 L567.21 670.86 L567.30 671.81 L567.39 672.76 L567.48 673.72 L567.56 674.67 L567.64 675.62 L567.72 676.57 L567.79 677.52 L567.85 678.47 L567.92 679.43 L567.97 680.38 L568.02 681.33 L568.07 682.28 L568.12 683.23 L568.16 684.18 L568.20 685.13 L568.25 686.09 L568.29 687.04 L568.33 687.99 L568.37 688.94 L568.42 689.89 L568.46 690.84 L568.51 691.80 L568.57 692.75 L568.63 693.70 L568.69 694.65 L568.76 695.60 L568.84 696.55 L568.92 697.51 L569.02 698.46 L569.14 699.41 L569.28 700.36 L569.44 701.31 L569.61 702.26 L569.79 703.21 L569.97 704.17 L570.16 705.12 L570.35 706.07 L570.55 707.02 L570.76 707.97 L570.98 708.92 L571.21 709.88 L571.45 710.83 L571.70 711.78 L571.96 712.73 L572.22 713.68 L572.48 714.63 L572.75 715.58 L573.03 716.54 L573.31 717.49 L573.60 718.44 L573.89 719.39 L574.20 720.34 L574.50 721.29 L574.81 722.25 L575.13 723.20 L575.45 724.15 L575.77 725.10 L576.10 726.05 L576.43 727.00 L576.75 727.96 L577.08 728.91 L577.41 729.86 L577.74 730.81 L578.07 731.76 L578.41 732.71 L578.75 733.66 L579.10 734.62 L579.45 735.57 L579.79 736.52 L580.15 737.47 L580.50 738.42 L580.85 739.37 L581.23 740.33 L581.65 741.28 L582.11 742.23 L582.59 743.18 L583.08 744.13 L583.56 745.08 L584.01 746.04 L584.43 746.99 L584.80 747.94 L585.11 748.89 L585.33 749.84 L585.47 750.79 L585.50 751.74 L585.45 752.70 L585.35 753.65 L585.20 754.60 L585.00 755.55 L584.77 756.50 L584.52 757.45 L584.24 758.41 L583.95 759.36 L583.66 760.31 L583.33 761.26 L582.89 762.21 L582.36 763.16 L581.77 764.12 L581.15 765.07 L580.50 766.02 L579.86 766.97 L579.25 767.92 L578.68 768.87 L578.19 769.82 L577.73 770.78 L577.30 771.73 L576.87 772.68 L576.47 773.63 L576.09 774.58 L575.72 775.53 L575.38 776.49 L575.03 777.44 L574.70 778.39 L574.38 779.34 L574.06 780.29 L573.76 781.24 L573.46 782.19 L573.17 783.15 L572.89 784.10 L572.61 785.05 L572.35 786.00 L572.09 786.95 L571.85 787.90 L571.61 788.86 L571.38 789.81 L571.16 790.76 L570.94 791.71 L570.73 792.66 L570.53 793.61 L570.33 794.57 L570.13 795.52 L569.94 796.47 L569.75 797.42 L569.56 798.37 L569.37 799.32 L569.19 800.27 L569.01 801.23 L568.85 802.18 L568.69 803.13 L568.53 804.08 L568.37 805.03 L568.22 805.98 L568.05 806.94 L567.88 807.89 L567.69 808.84 L567.49 809.79 L567.27 810.74 L567.03 811.69 L566.77 812.65 L566.49 813.60 L566.20 814.55 L565.90 815.50 L565.90 815.50 L565.60 814.55 L565.31 813.60 L565.03 812.65 L564.77 811.69 L564.53 810.74 L564.31 809.79 L564.11 808.84 L563.92 807.89 L563.75 806.94 L563.58 805.98 L563.43 805.03 L563.27 804.08 L563.11 803.13 L562.95 802.18 L562.79 801.23 L562.61 800.27 L562.43 799.32 L562.24 798.37 L562.05 797.42 L561.86 796.47 L561.67 795.52 L561.47 794.57 L561.27 793.61 L561.07 792.66 L560.86 791.71 L560.64 790.76 L560.42 789.81 L560.19 788.86 L559.95 787.90 L559.71 786.95 L559.45 786.00 L559.19 785.05 L558.91 784.10 L558.63 783.15 L558.34 782.19 L558.04 781.24 L557.74 780.29 L557.42 779.34 L557.10 778.39 L556.77 777.44 L556.42 776.49 L556.08 775.53 L555.71 774.58 L555.33 773.63 L554.93 772.68 L554.50 771.73 L554.07 770.78 L553.61 769.82 L553.12 768.87 L552.55 767.92 L551.94 766.97 L551.30 766.02 L550.65 765.07 L550.03 764.12 L549.44 763.16 L548.91 762.21 L548.47 761.26 L548.14 760.31 L547.85 759.36 L547.56 758.41 L547.28 757.45 L547.03 756.50 L546.80 755.55 L546.60 754.60 L546.45 753.65 L546.35 752.70 L546.30 751.74 L546.33 750.79 L546.47 749.84 L546.69 748.89 L547.00 747.94 L547.37 746.99 L547.79 746.04 L548.24 745.08 L548.72 744.13 L549.21 743.18 L549.69 742.23 L550.15 741.28 L550.57 740.33 L550.95 739.37 L551.30 738.42 L551.65 737.47 L552.01 736.52 L552.35 735.57 L552.70 734.62 L553.05 733.66 L553.39 732.71 L553.73 731.76 L554.06 730.81 L554.39 729.86 L554.72 728.91 L555.05 727.96 L555.37 727.00 L555.70 726.05 L556.03 725.10 L556.35 724.15 L556.67 723.20 L556.99 722.25 L557.30 721.29 L557.60 720.34 L557.91 719.39 L558.20 718.44 L558.49 717.49 L558.77 716.54 L559.05 715.58 L559.32 714.63 L559.58 713.68 L559.84 712.73 L560.10 711.78 L560.35 710.83 L560.59 709.88 L560.82 708.92 L561.04 707.97 L561.25 707.02 L561.45 706.07 L561.64 705.12 L561.83 704.17 L562.01 703.21 L562.19 702.26 L562.36 701.31 L562.52 700.36 L562.66 699.41 L562.78 698.46 L562.88 697.51 L562.96 696.55 L563.04 695.60 L563.11 694.65 L563.17 693.70 L563.23 692.75 L563.29 691.80 L563.34 690.84 L563.38 689.89 L563.43 688.94 L563.47 687.99 L563.51 687.04 L563.55 686.09 L563.60 685.13 L563.64 684.18 L563.68 683.23 L563.73 682.28 L563.78 681.33 L563.83 680.38 L563.88 679.43 L563.95 678.47 L564.01 677.52 L564.08 676.57 L564.16 675.62 L564.24 674.67 L564.32 673.72 L564.41 672.76 L564.50 671.81 L564.59 670.86 L564.69 669.91 L564.78 668.96 L564.88 668.01 L564.98 667.05 L565.09 666.10 L565.19 665.15 L565.30 664.20 Z" fill="#3274a1" stroke="#3f3f3f" stroke-width="1"/><line x1="565.9" y1="706.3" x2="565.9" y2="795.9" stroke="#3f3f3f" stroke-width="1"/><rect x="564.1999999999999" y="739.5" width="3.4" height="27.100000000000023" fill="#3f3f3f"/><circle cx="565.9" cy="753.8" r="1" fill="#fff"/><path d="M609.90 649.10 L609.90 650.12 L609.91 651.15 L609.92 652.17 L609.94 653.19 L609.96 654.21 L609.98 655.24 L610.01 656.26 L610.04 657.28 L610.07 658.30 L610.11 659.33 L610.15 660.35 L610.18 661.37 L610.23 662.39 L610.27 663.42 L610.31 664.44 L610.36 665.46 L610.43 666.48 L610.50 667.51 L610.59 668.53 L610.68 669.55 L610.79 670.58 L610.90 671.60 L611.01 672.62 L611.12 673.64 L611.24 674.67 L611.36 675.69 L611.48 676.71 L611.60 677.73 L611.72 678.76 L611.85 679.78 L611.97 680.80 L612.10 681.82 L612.24 682.85 L612.38 683.87 L612.52 684.89 L612.67 685.92 L612.82 686.94 L612.98 687.96 L613.14 688.98 L613.31 690.01 L613.48 691.03 L613.66 692.05 L613.85 693.07 L614.05 694.10 L614.28 695.12 L614.51 696.14 L614.76 697.16 L615.02 698.19 L615.29 699.21 L615.56 700.23 L615.84 701.25 L616.12 702.28 L616.40 703.30 L616.69 704.32 L616.96 705.35 L617.23 706.37 L617.50 707.39 L617.75 708.41 L618.00 709.44 L618.24 710.46 L618.48 711.48 L618.71 712.50 L618.94 713.53 L619.18 714.55 L619.41 715.57 L619.65 716.59 L619.89 717.62 L620.15 718.64 L620.40 719.66 L620.67 720.68 L620.96 721.71 L621.25 722.73 L621.56 723.75 L621.91 724.78 L622.27 725.80 L622.66 726.82 L623.06 727.84 L623.48 728.87 L623.90 729.89 L624.32 730.91 L624.74 731.93 L625.16 732.96 L625.57 733.98 L625.96 735.00 L626.34 736.02 L626.69 737.05 L627.02 738.07 L627.35 739.09 L627.69 740.12 L628.04 741.14 L628.40 742.16 L628.76 743.18 L629.11 744.21 L629.44 745.23 L629.76 746.25 L630.04 747.27 L630.30 748.30 L630.52 749.32 L630.70 750.34 L630.82 751.36 L630.89 752.39 L630.89 753.41 L630.81 754.43 L630.63 755.45 L630.38 756.48 L630.06 757.50 L629.69 758.52 L629.26 759.55 L628.80 760.57 L628.31 761.59 L627.80 762.61 L627.28 763.64 L626.65 764.66 L625.84 765.68 L624.89 766.70 L623.84 767.73 L622.73 768.75 L621.60 769.77 L620.49 770.79 L619.44 771.82 L618.48 772.84 L617.47 773.86 L616.39 774.88 L615.30 775.91 L614.29 776.93 L613.41 777.95 L612.73 778.98 L612.32 780.00 L612.12 781.02 L611.95 782.04 L611.80 783.07 L611.68 784.09 L611.57 785.11 L611.48 786.13 L611.39 787.16 L611.31 788.18 L611.23 789.20 L611.14 790.22 L611.05 791.25 L610.97 792.27 L610.89 793.29 L610.81 794.32 L610.74 795.34 L610.67 796.36 L610.60 797.38 L610.53 798.41 L610.45 799.43 L610.38 800.45 L610.30 801.47 L610.22 802.50 L610.13 803.52 L610.04 804.54 L609.94 805.56 L609.84 806.59 L609.74 807.61 L609.63 808.63 L609.52 809.65 L609.41 810.68 L609.30 811.70 L609.30 811.70 L609.19 810.68 L609.08 809.65 L608.97 808.63 L608.86 807.61 L608.76 806.59 L608.66 805.56 L608.56 804.54 L608.47 803.52 L608.38 802.50 L608.30 801.47 L608.22 800.45 L608.15 799.43 L608.07 798.41 L608.00 797.38 L607.93 796.36 L607.86 795.34 L607.79 794.32 L607.71 793.29 L607.63 792.27 L607.55 791.25 L607.46 790.22 L607.37 789.20 L607.29 788.18 L607.21 787.16 L607.12 786.13 L607.03 785.11 L606.92 784.09 L606.80 783.07 L606.65 782.04 L606.48 781.02 L606.28 780.00 L605.87 778.98 L605.19 777.95 L604.31 776.93 L603.30 775.91 L602.21 774.88 L601.13 773.86 L600.12 772.84 L599.16 771.82 L598.11 770.79 L597.00 769.77 L595.87 768.75 L594.76 767.73 L593.71 766.70 L592.76 765.68 L591.95 764.66 L591.32 763.64 L590.80 762.61 L590.29 761.59 L589.80 760.57 L589.34 759.55 L588.91 758.52 L588.54 757.50 L588.22 756.48 L587.97 755.45 L587.79 754.43 L587.71 753.41 L587.71 752.39 L587.78 751.36 L587.90 750.34 L588.08 749.32 L588.30 748.30 L588.56 747.27 L588.84 746.25 L589.16 745.23 L589.49 744.21 L589.84 743.18 L590.20 742.16 L590.56 741.14 L590.91 740.12 L591.25 739.09 L591.58 738.07 L591.91 737.05 L592.26 736.02 L592.64 735.00 L593.03 733.98 L593.44 732.96 L593.86 731.93 L594.28 730.91 L594.70 729.89 L595.12 728.87 L595.54 727.84 L595.94 726.82 L596.33 725.80 L596.69 724.78 L597.04 723.75 L597.35 722.73 L597.64 721.71 L597.93 720.68 L598.20 719.66 L598.45 718.64 L598.71 717.62 L598.95 716.59 L599.19 715.57 L599.42 714.55 L599.66 713.53 L599.89 712.50 L600.12 711.48 L600.36 710.46 L600.60 709.44 L600.85 708.41 L601.10 707.39 L601.37 706.37 L601.64 705.35 L601.91 704.32 L602.20 703.30 L602.48 702.28 L602.76 701.25 L603.04 700.23 L603.31 699.21 L603.58 698.19 L603.84 697.16 L604.09 696.14 L604.32 695.12 L604.55 694.10 L604.75 693.07 L604.94 692.05 L605.12 691.03 L605.29 690.01 L605.46 688.98 L605.62 687.96 L605.78 686.94 L605.93 685.92 L606.08 684.89 L606.22 683.87 L606.36 682.85 L606.50 681.82 L606.63 680.80 L606.75 679.78 L606.88 678.76 L607.00 677.73 L607.12 676.71 L607.24 675.69 L607.36 674.67 L607.48 673.64 L607.59 672.62 L607.70 671.60 L607.81 670.58 L607.92 669.55 L608.01 668.53 L608.10 667.51 L608.17 666.48 L608.24 665.46 L608.29 664.44 L608.33 663.42 L608.37 662.39 L608.42 661.37 L608.45 660.35 L608.49 659.33 L608.53 658.30 L608.56 657.28 L608.59 656.26 L608.62 655.24 L608.64 654.21 L608.66 653.19 L608.68 652.17 L608.69 651.15 L608.70 650.12 L608.70 649.10 Z" fill="#e1812c" stroke="#3f3f3f" stroke-width="1"/><line x1="609.3" y1="676" x2="609.3" y2="795" stroke="#3f3f3f" stroke-width="1"/><rect x="607.5999999999999" y="723.6" width="3.4" height="35.39999999999998" fill="#3f3f3f"/><circle cx="609.3" cy="745.5" r="1" fill="#fff"/><path d="M675.10 643.10 L675.10 644.17 L675.10 645.25 L675.10 646.32 L675.11 647.40 L675.11 648.47 L675.12 649.55 L675.13 650.62 L675.13 651.70 L675.14 652.77 L675.15 653.85 L675.17 654.92 L675.18 656.00 L675.19 657.07 L675.21 658.15 L675.23 659.22 L675.25 660.30 L675.27 661.37 L675.29 662.45 L675.31 663.52 L675.34 664.60 L675.37 665.67 L675.39 666.75 L675.43 667.82 L675.46 668.90 L675.49 669.97 L675.57 671.05 L675.77 672.12 L676.07 673.20 L676.45 674.27 L676.86 675.35 L677.30 676.42 L677.72 677.49 L678.10 678.57 L678.43 679.64 L678.74 680.72 L679.05 681.79 L679.35 682.87 L679.66 683.94 L679.96 685.02 L680.25 686.09 L680.54 687.17 L680.83 688.24 L681.11 689.32 L681.39 690.39 L681.67 691.47 L681.94 692.54 L682.20 693.62 L682.46 694.69 L682.72 695.77 L682.97 696.84 L683.22 697.92 L683.47 698.99 L683.71 700.07 L683.96 701.14 L684.19 702.22 L684.43 703.29 L684.66 704.37 L684.90 705.44 L685.13 706.52 L685.36 707.59 L685.58 708.67 L685.79 709.74 L686.00 710.82 L686.20 711.89 L686.40 712.96 L686.60 714.04 L686.79 715.11 L686.99 716.19 L687.19 717.26 L687.40 718.34 L687.62 719.41 L687.84 720.49 L688.08 721.56 L688.34 722.64 L688.61 723.71 L688.91 724.79 L689.24 725.86 L689.58 726.94 L689.94 728.01 L690.32 729.09 L690.70 730.16 L691.08 731.24 L691.46 732.31 L691.84 733.39 L692.21 734.46 L692.56 735.54 L692.90 736.61 L693.21 737.69 L693.51 738.76 L693.84 739.84 L694.17 740.91 L694.51 741.99 L694.85 743.06 L695.18 744.14 L695.49 745.21 L695.77 746.28 L696.02 747.36 L696.23 748.43 L696.38 749.51 L696.47 750.58 L696.50 751.66 L696.40 752.73 L696.17 753.81 L695.83 754.88 L695.41 755.96 L694.93 757.03 L694.42 758.11 L693.91 759.18 L693.41 760.26 L692.93 761.33 L692.42 762.41 L691.88 763.48 L691.30 764.56 L690.69 765.63 L690.04 766.71 L689.36 767.78 L688.63 768.86 L687.84 769.93 L686.81 771.01 L685.61 772.08 L684.39 773.16 L683.31 774.23 L682.54 775.31 L682.10 776.38 L681.75 777.46 L681.44 778.53 L681.19 779.61 L680.96 780.68 L680.75 781.75 L680.55 782.83 L680.35 783.90 L680.17 784.98 L680.00 786.05 L679.84 787.13 L679.69 788.20 L679.55 789.28 L679.41 790.35 L679.28 791.43 L679.14 792.50 L679.00 793.58 L678.85 794.65 L678.70 795.73 L678.53 796.80 L678.36 797.88 L678.16 798.95 L677.96 800.03 L677.75 801.10 L677.52 802.18 L677.29 803.25 L677.05 804.33 L676.80 805.40 L676.55 806.48 L676.29 807.55 L676.02 808.63 L675.74 809.70 L675.45 810.78 L675.14 811.85 L674.82 812.93 L674.50 814.00 L674.50 814.00 L674.18 812.93 L673.86 811.85 L673.55 810.78 L673.26 809.70 L672.98 808.63 L672.71 807.55 L672.45 806.48 L672.20 805.40 L671.95 804.33 L671.71 803.25 L671.48 802.18 L671.25 801.10 L671.04 800.03 L670.84 798.95 L670.64 797.88 L670.47 796.80 L670.30 795.73 L670.15 794.65 L670.00 793.58 L669.86 792.50 L669.72 791.43 L669.59 790.35 L669.45 789.28 L669.31 788.20 L669.16 787.13 L669.00 786.05 L668.83 784.98 L668.65 783.90 L668.45 782.83 L668.25 781.75 L668.04 780.68 L667.81 779.61 L667.56 778.53 L667.25 777.46 L666.90 776.38 L666.46 775.31 L665.69 774.23 L664.61 773.16 L663.39 772.08 L662.19 771.01 L661.16 769.93 L660.37 768.86 L659.64 767.78 L658.96 766.71 L658.31 765.63 L657.70 764.56 L657.12 763.48 L656.58 762.41 L656.07 761.33 L655.59 760.26 L655.09 759.18 L654.58 758.11 L654.07 757.03 L653.59 755.96 L653.17 754.88 L652.83 753.81 L652.60 752.73 L652.50 751.66 L652.53 750.58 L652.62 749.51 L652.77 748.43 L652.98 747.36 L653.23 746.28 L653.51 745.21 L653.82 744.14 L654.15 743.06 L654.49 741.99 L654.83 740.91 L655.16 739.84 L655.49 738.76 L655.79 737.69 L656.10 736.61 L656.44 735.54 L656.79 734.46 L657.16 733.39 L657.54 732.31 L657.92 731.24 L658.30 730.16 L658.68 729.09 L659.06 728.01 L659.42 726.94 L659.76 725.86 L660.09 724.79 L660.39 723.71 L660.66 722.64 L660.92 721.56 L661.16 720.49 L661.38 719.41 L661.60 718.34 L661.81 717.26 L662.01 716.19 L662.21 715.11 L662.40 714.04 L662.60 712.96 L662.80 711.89 L663.00 710.82 L663.21 709.74 L663.42 708.67 L663.64 707.59 L663.87 706.52 L664.10 705.44 L664.34 704.37 L664.57 703.29 L664.81 702.22 L665.04 701.14 L665.29 700.07 L665.53 698.99 L665.78 697.92 L666.03 696.84 L666.28 695.77 L666.54 694.69 L666.80 693.62 L667.06 692.54 L667.33 691.47 L667.61 690.39 L667.89 689.32 L668.17 688.24 L668.46 687.17 L668.75 686.09 L669.04 685.02 L669.34 683.94 L669.65 682.87 L669.95 681.79 L670.26 680.72 L670.57 679.64 L670.90 678.57 L671.28 677.49 L671.70 676.42 L672.14 675.35 L672.55 674.27 L672.93 673.20 L673.23 672.12 L673.43 671.05 L673.51 669.97 L673.54 668.90 L673.57 667.82 L673.61 666.75 L673.63 665.67 L673.66 664.60 L673.69 663.52 L673.71 662.45 L673.73 661.37 L673.75 660.30 L673.77 659.22 L673.79 658.15 L673.81 657.07 L673.82 656.00 L673.83 654.92 L673.85 653.85 L673.86 652.77 L673.87 651.70 L673.87 650.62 L673.88 649.55 L673.89 648.47 L673.89 647.40 L673.90 646.32 L673.90 645.25 L673.90 644.17 L673.90 643.10 Z" fill="#3274a1" stroke="#3f3f3f" stroke-width="1"/><line x1="674.5" y1="682.2" x2="674.5" y2="797.4" stroke="#3f3f3f" stroke-width="1"/><rect x="672.8" y="725.9" width="3.4" height="36.89999999999998" fill="#3f3f3f"/><circle cx="674.5" cy="746.2" r="1" fill="#fff"/><path d="M718.20 631.60 L718.20 632.77 L718.20 633.94 L718.20 635.11 L718.20 636.28 L718.21 637.46 L718.21 638.63 L718.22 639.80 L718.22 640.97 L718.23 642.14 L718.23 643.31 L718.24 644.48 L718.25 645.65 L718.26 646.82 L718.27 647.99 L718.28 649.17 L718.29 650.34 L718.30 651.51 L718.31 652.68 L718.33 653.85 L718.34 655.02 L718.36 656.19 L718.38 657.36 L718.39 658.53 L718.41 659.71 L718.43 660.88 L718.45 662.05 L718.48 663.22 L718.50 664.39 L718.52 665.56 L718.55 666.73 L718.58 667.90 L718.60 669.07 L718.63 670.25 L718.66 671.42 L718.70 672.59 L718.73 673.76 L718.76 674.93 L718.80 676.10 L718.87 677.27 L719.02 678.44 L719.25 679.61 L719.52 680.78 L719.84 681.96 L720.19 683.13 L720.55 684.30 L720.91 685.47 L721.25 686.64 L721.58 687.81 L721.87 688.98 L722.15 690.15 L722.42 691.32 L722.70 692.50 L722.98 693.67 L723.26 694.84 L723.55 696.01 L723.85 697.18 L724.16 698.35 L724.48 699.52 L724.82 700.69 L725.17 701.86 L725.55 703.04 L725.95 704.21 L726.36 705.38 L726.78 706.55 L727.21 707.72 L727.64 708.89 L728.08 710.06 L728.51 711.23 L728.94 712.40 L729.37 713.57 L729.78 714.75 L730.17 715.92 L730.57 717.09 L730.97 718.26 L731.36 719.43 L731.76 720.60 L732.15 721.77 L732.54 722.94 L732.92 724.11 L733.30 725.29 L733.68 726.46 L734.05 727.63 L734.41 728.80 L734.77 729.97 L735.13 731.14 L735.52 732.31 L735.94 733.48 L736.37 734.65 L736.81 735.83 L737.23 737.00 L737.64 738.17 L738.02 739.34 L738.36 740.51 L738.65 741.68 L738.87 742.85 L739.03 744.02 L739.10 745.19 L739.09 746.36 L739.05 747.54 L738.99 748.71 L738.91 749.88 L738.80 751.05 L738.69 752.22 L738.55 753.39 L738.28 754.56 L737.87 755.73 L737.34 756.90 L736.73 758.08 L736.05 759.25 L735.33 760.42 L734.61 761.59 L733.89 762.76 L733.21 763.93 L732.44 765.10 L731.57 766.27 L730.67 767.44 L729.77 768.62 L728.92 769.79 L728.18 770.96 L727.58 772.13 L727.15 773.30 L726.74 774.47 L726.37 775.64 L726.09 776.81 L725.92 777.98 L725.91 779.15 L726.00 780.33 L726.16 781.50 L726.36 782.67 L726.57 783.84 L726.77 785.01 L726.92 786.18 L727.00 787.35 L726.99 788.52 L726.92 789.69 L726.81 790.87 L726.66 792.04 L726.48 793.21 L726.27 794.38 L726.04 795.55 L725.80 796.72 L725.56 797.89 L725.30 799.06 L724.98 800.23 L724.61 801.41 L724.19 802.58 L723.74 803.75 L723.27 804.92 L722.78 806.09 L722.29 807.26 L721.81 808.43 L721.33 809.60 L720.84 810.77 L720.33 811.94 L719.81 813.12 L719.28 814.29 L718.73 815.46 L718.17 816.63 L717.60 817.80 L717.60 817.80 L717.03 816.63 L716.47 815.46 L715.92 814.29 L715.39 813.12 L714.87 811.94 L714.36 810.77 L713.87 809.60 L713.39 808.43 L712.91 807.26 L712.42 806.09 L711.93 804.92 L711.46 803.75 L711.01 802.58 L710.59 801.41 L710.22 800.23 L709.90 799.06 L709.64 797.89 L709.40 796.72 L709.16 795.55 L708.93 794.38 L708.72 793.21 L708.54 792.04 L708.39 790.87 L708.28 789.69 L708.21 788.52 L708.20 787.35 L708.28 786.18 L708.43 785.01 L708.63 783.84 L708.84 782.67 L709.04 781.50 L709.20 780.33 L709.29 779.15 L709.28 777.98 L709.11 776.81 L708.83 775.64 L708.46 774.47 L708.05 773.30 L707.62 772.13 L707.02 770.96 L706.28 769.79 L705.43 768.62 L704.53 767.44 L703.63 766.27 L702.76 765.10 L701.99 763.93 L701.31 762.76 L700.59 761.59 L699.87 760.42 L699.15 759.25 L698.47 758.08 L697.86 756.90 L697.33 755.73 L696.92 754.56 L696.65 753.39 L696.51 752.22 L696.40 751.05 L696.29 749.88 L696.21 748.71 L696.15 747.54 L696.11 746.36 L696.10 745.19 L696.17 744.02 L696.33 742.85 L696.55 741.68 L696.84 740.51 L697.18 739.34 L697.56 738.17 L697.97 737.00 L698.39 735.83 L698.83 734.65 L699.26 733.48 L699.68 732.31 L700.07 731.14 L700.43 729.97 L700.79 728.80 L701.15 727.63 L701.52 726.46 L701.90 725.29 L702.28 724.11 L702.66 722.94 L703.05 721.77 L703.44 720.60 L703.84 719.43 L704.23 718.26 L704.63 717.09 L705.03 715.92 L705.42 714.75 L705.83 713.57 L706.26 712.40 L706.69 711.23 L707.12 710.06 L707.56 708.89 L707.99 707.72 L708.42 706.55 L708.84 705.38 L709.25 704.21 L709.65 703.04 L710.03 701.86 L710.38 700.69 L710.72 699.52 L711.04 698.35 L711.35 697.18 L711.65 696.01 L711.94 694.84 L712.22 693.67 L712.50 692.50 L712.78 691.32 L713.05 690.15 L713.33 688.98 L713.62 687.81 L713.95 686.64 L714.29 685.47 L714.65 684.30 L715.01 683.13 L715.36 681.96 L715.68 680.78 L715.95 679.61 L716.18 678.44 L716.33 677.27 L716.40 676.10 L716.44 674.93 L716.47 673.76 L716.50 672.59 L716.54 671.42 L716.57 670.25 L716.60 669.07 L716.62 667.90 L716.65 666.73 L716.68 665.56 L716.70 664.39 L716.72 663.22 L716.75 662.05 L716.77 660.88 L716.79 659.71 L716.81 658.53 L716.82 657.36 L716.84 656.19 L716.86 655.02 L716.87 653.85 L716.89 652.68 L716.90 651.51 L716.91 650.34 L716.92 649.17 L716.93 647.99 L716.94 646.82 L716.95 645.65 L716.96 644.48 L716.97 643.31 L716.97 642.14 L716.98 640.97 L716.98 639.80 L716.99 638.63 L716.99 637.46 L717.00 636.28 L717.00 635.11 L717.00 633.94 L717.00 632.77 L717.00 631.60 Z" fill="#e1812c" stroke="#3f3f3f" stroke-width="1"/><line x1="717.6" y1="688.3" x2="717.6" y2="796.7" stroke="#3f3f3f" stroke-width="1"/><rect x="715.9" y="731.2" width="3.4" height="33.09999999999991" fill="#3f3f3f"/><circle cx="717.6" cy="749.2" r="1" fill="#fff"/><rect x="533.2" y="622.4" width="217.39999999999998" height="205.20000000000005" fill="none" stroke="#555" stroke-width="1.1"/><line x1="587.7" y1="827.6" x2="587.7" y2="830.6" stroke="#444" stroke-width="1"/><text x="587.7" y="839.4" text-anchor="middle" font-size="8.6" fill="#4a4a4a">0</text><line x1="695.4" y1="827.6" x2="695.4" y2="830.6" stroke="#444" stroke-width="1"/><text x="695.4" y="839.4" text-anchor="middle" font-size="8.6" fill="#4a4a4a">1</text><text x="641.3" y="849.3000000000001" text-anchor="middle" font-size="8.6" fill="#4a4a4a">survived</text><text x="514.1" y="725.8" text-anchor="middle" font-size="8.6" fill="#4a4a4a" transform="rotate(-90 514.1 725.8)">age</text><rect x="693.5" y="626.4" width="53.0" height="36.200000000000045" rx="1.5" fill="#ffffff" fill-opacity="0.8" stroke="#d6d6d6" stroke-width="0.8"/><text x="720.0" y="635.4" text-anchor="middle" font-size="8.3" fill="#4a4a4a">sex</text><rect x="696.0" y="640.9" width="15.8" height="5.5" fill="#3274a1" stroke="#3f3f3f" stroke-width="0.6"/><rect x="696.0" y="652.4" width="15.8" height="5.5" fill="#e1812c" stroke="#3f3f3f" stroke-width="0.6"/><text x="717.5" y="646.9" font-size="8.3" fill="#4a4a4a">female</text><text x="717.5" y="657.9" font-size="8.3" fill="#4a4a4a">male</text><line x1="790.2" y1="661.1999999999999" x2="793.2" y2="661.1999999999999" stroke="#444" stroke-width="1"/><text x="788.7" y="664.3" text-anchor="end" font-size="8.6" fill="#4a4a4a">0.8</text><line x1="790.2" y1="700.3499999999999" x2="793.2" y2="700.3499999999999" stroke="#444" stroke-width="1"/><text x="788.7" y="703.4499999999999" text-anchor="end" font-size="8.6" fill="#4a4a4a">0.6</text><line x1="790.2" y1="739.5" x2="793.2" y2="739.5" stroke="#444" stroke-width="1"/><text x="788.7" y="742.6" text-anchor="end" font-size="8.6" fill="#4a4a4a">0.4</text><line x1="790.2" y1="778.65" x2="793.2" y2="778.65" stroke="#444" stroke-width="1"/><text x="788.7" y="781.75" text-anchor="end" font-size="8.6" fill="#4a4a4a">0.2</text><line x1="790.2" y1="817.8" x2="793.2" y2="817.8" stroke="#444" stroke-width="1"/><text x="788.7" y="820.9" text-anchor="end" font-size="8.6" fill="#4a4a4a">0.0</text><line x1="808.9" y1="827.6" x2="808.9" y2="830.6" stroke="#444" stroke-width="1"/><text x="808.9" y="839.4" text-anchor="middle" font-size="8.6" fill="#4a4a4a">0</text><line x1="840" y1="827.6" x2="840" y2="830.6" stroke="#444" stroke-width="1"/><text x="840" y="839.4" text-anchor="middle" font-size="8.6" fill="#4a4a4a">1</text><line x1="871.2" y1="827.6" x2="871.2" y2="830.6" stroke="#444" stroke-width="1"/><text x="871.2" y="839.4" text-anchor="middle" font-size="8.6" fill="#4a4a4a">2</text><line x1="902.6" y1="827.6" x2="902.6" y2="830.6" stroke="#444" stroke-width="1"/><text x="902.6" y="839.4" text-anchor="middle" font-size="8.6" fill="#4a4a4a">3</text><line x1="933.6" y1="827.6" x2="933.6" y2="830.6" stroke="#444" stroke-width="1"/><text x="933.6" y="839.4" text-anchor="middle" font-size="8.6" fill="#4a4a4a">4</text><line x1="964.4" y1="827.6" x2="964.4" y2="830.6" stroke="#444" stroke-width="1"/><text x="964.4" y="839.4" text-anchor="middle" font-size="8.6" fill="#4a4a4a">5</text><line x1="995.5" y1="827.6" x2="995.5" y2="830.6" stroke="#444" stroke-width="1"/><text x="995.5" y="839.4" text-anchor="middle" font-size="8.6" fill="#4a4a4a">8</text><line x1="808.9" y1="659.3" x2="808.9" y2="681.9" stroke="#1f77b4" stroke-width="2.6"/><line x1="840" y1="657.8" x2="840" y2="685.2" stroke="#1f77b4" stroke-width="2.6"/><line x1="871.2" y1="630.7" x2="871.2" y2="704.9" stroke="#1f77b4" stroke-width="2.6"/><line x1="902.6" y1="686.1" x2="902.6" y2="743.7" stroke="#1f77b4" stroke-width="2.6"/><line x1="933.6" y1="703.6" x2="933.6" y2="777.5" stroke="#1f77b4" stroke-width="2.6"/><path d="M808.90 670.00 L840.00 670.40 L871.20 663.40 L902.60 736.30 L933.60 762.20 L964.40 817.80" fill="none" stroke="#1f77b4" stroke-width="2.6" stroke-linejoin="round"/><circle cx="808.9" cy="670" r="3.7" fill="#1f77b4"/><circle cx="840" cy="670.4" r="3.7" fill="#1f77b4"/><circle cx="871.2" cy="663.4" r="3.7" fill="#1f77b4"/><circle cx="902.6" cy="736.3" r="3.7" fill="#1f77b4"/><circle cx="933.6" cy="762.2" r="3.7" fill="#1f77b4"/><circle cx="964.4" cy="817.8" r="3.7" fill="#1f77b4"/><line x1="808.9" y1="776.2" x2="808.9" y2="789.5" stroke="#ff7f0e" stroke-width="2.6"/><line x1="840" y1="750.4" x2="840" y2="779.4" stroke="#ff7f0e" stroke-width="2.6"/><line x1="871.2" y1="748.9" x2="871.2" y2="810.4" stroke="#ff7f0e" stroke-width="2.6"/><line x1="902.6" y1="743.3" x2="902.6" y2="819" stroke="#ff7f0e" stroke-width="2.6"/><line x1="933.6" y1="777.5" x2="933.6" y2="819" stroke="#ff7f0e" stroke-width="2.6"/><path d="M808.90 783.00 L840.00 764.60 L871.20 783.40 L902.60 793.60 L933.60 804.80 L964.40 817.80 L995.50 817.80" fill="none" stroke="#ff7f0e" stroke-width="2.6" stroke-linejoin="round"/><circle cx="808.9" cy="783" r="3.7" fill="#ff7f0e"/><circle cx="840" cy="764.6" r="3.7" fill="#ff7f0e"/><circle cx="871.2" cy="783.4" r="3.7" fill="#ff7f0e"/><circle cx="902.6" cy="793.6" r="3.7" fill="#ff7f0e"/><circle cx="933.6" cy="804.8" r="3.7" fill="#ff7f0e"/><circle cx="964.4" cy="817.8" r="3.7" fill="#ff7f0e"/><circle cx="995.5" cy="817.8" r="3.7" fill="#ff7f0e"/><rect x="793.2" y="622.4" width="218.29999999999995" height="205.20000000000005" fill="none" stroke="#555" stroke-width="1.1"/><text x="901.8" y="849.3000000000001" text-anchor="middle" font-size="8.6" fill="#4a4a4a">sibsp</text><text x="772.0" y="725.8" text-anchor="middle" font-size="8.6" fill="#4a4a4a" transform="rotate(-90 772.0 725.8)">survived</text><rect x="953.5" y="626.4" width="54.0" height="36.200000000000045" rx="1.5" fill="#ffffff" fill-opacity="0.8" stroke="#d6d6d6" stroke-width="0.8"/><text x="980.5" y="635.4" text-anchor="middle" font-size="8.3" fill="#4a4a4a">sex</text><circle cx="964.4" cy="643.9" r="3.4" fill="#1f77b4"/><circle cx="964.4" cy="655.4" r="3.4" fill="#ff7f0e"/><text x="978.5" y="646.9" font-size="8.3" fill="#4a4a4a">female</text><text x="978.5" y="658.4" font-size="8.3" fill="#4a4a4a">male</text><line x1="1051.6" y1="631.7" x2="1054.6" y2="631.7" stroke="#444" stroke-width="1"/><text x="1050.1" y="634.8000000000001" text-anchor="end" font-size="8.6" fill="#4a4a4a">1.0</text><line x1="1051.6" y1="668.9399999999999" x2="1054.6" y2="668.9399999999999" stroke="#444" stroke-width="1"/><text x="1050.1" y="672.04" text-anchor="end" font-size="8.6" fill="#4a4a4a">0.8</text><line x1="1051.6" y1="706.18" x2="1054.6" y2="706.18" stroke="#444" stroke-width="1"/><text x="1050.1" y="709.28" text-anchor="end" font-size="8.6" fill="#4a4a4a">0.6</text><line x1="1051.6" y1="743.42" x2="1054.6" y2="743.42" stroke="#444" stroke-width="1"/><text x="1050.1" y="746.52" text-anchor="end" font-size="8.6" fill="#4a4a4a">0.4</text><line x1="1051.6" y1="780.66" x2="1054.6" y2="780.66" stroke="#444" stroke-width="1"/><text x="1050.1" y="783.76" text-anchor="end" font-size="8.6" fill="#4a4a4a">0.2</text><line x1="1051.6" y1="817.9" x2="1054.6" y2="817.9" stroke="#444" stroke-width="1"/><text x="1050.1" y="821.0" text-anchor="end" font-size="8.6" fill="#4a4a4a">0.0</text><line x1="1067.7" y1="827.2" x2="1067.7" y2="830.2" stroke="#444" stroke-width="1"/><text x="1067.7" y="839.0" text-anchor="middle" font-size="8.6" fill="#4a4a4a">0</text><line x1="1095.2" y1="827.2" x2="1095.2" y2="830.2" stroke="#444" stroke-width="1"/><text x="1095.2" y="839.0" text-anchor="middle" font-size="8.6" fill="#4a4a4a">1</text><line x1="1122.2" y1="827.2" x2="1122.2" y2="830.2" stroke="#444" stroke-width="1"/><text x="1122.2" y="839.0" text-anchor="middle" font-size="8.6" fill="#4a4a4a">2</text><line x1="1149.2" y1="827.2" x2="1149.2" y2="830.2" stroke="#444" stroke-width="1"/><text x="1149.2" y="839.0" text-anchor="middle" font-size="8.6" fill="#4a4a4a">3</text><line x1="1176.4" y1="827.2" x2="1176.4" y2="830.2" stroke="#444" stroke-width="1"/><text x="1176.4" y="839.0" text-anchor="middle" font-size="8.6" fill="#4a4a4a">4</text><line x1="1203.7" y1="827.2" x2="1203.7" y2="830.2" stroke="#444" stroke-width="1"/><text x="1203.7" y="839.0" text-anchor="middle" font-size="8.6" fill="#4a4a4a">5</text><line x1="1230.9" y1="827.2" x2="1230.9" y2="830.2" stroke="#444" stroke-width="1"/><text x="1230.9" y="839.0" text-anchor="middle" font-size="8.6" fill="#4a4a4a">6</text><line x1="1258.2" y1="827.2" x2="1258.2" y2="830.2" stroke="#444" stroke-width="1"/><text x="1258.2" y="839.0" text-anchor="middle" font-size="8.6" fill="#4a4a4a">9</text><line x1="1067.7" y1="670" x2="1067.7" y2="689.2" stroke="#1f77b4" stroke-width="2.6"/><line x1="1095.2" y1="654" x2="1095.2" y2="687.4" stroke="#1f77b4" stroke-width="2.6"/><line x1="1122.2" y1="676.7" x2="1122.2" y2="722.2" stroke="#1f77b4" stroke-width="2.6"/><line x1="1149.2" y1="630.9" x2="1149.2" y2="725.4" stroke="#1f77b4" stroke-width="2.6"/><line x1="1176.4" y1="677.6" x2="1176.4" y2="817.9" stroke="#1f77b4" stroke-width="2.6"/><line x1="1203.7" y1="677.6" x2="1203.7" y2="817.9" stroke="#1f77b4" stroke-width="2.6"/><path d="M1067.70 679.60 L1095.20 670.00 L1122.20 699.30 L1149.20 663.60 L1176.40 771.50 L1203.70 771.50 L1230.90 817.90" fill="none" stroke="#1f77b4" stroke-width="2.6" stroke-linejoin="round"/><circle cx="1067.7" cy="679.6" r="3.7" fill="#1f77b4"/><circle cx="1095.2" cy="670" r="3.7" fill="#1f77b4"/><circle cx="1122.2" cy="699.3" r="3.7" fill="#1f77b4"/><circle cx="1149.2" cy="663.6" r="3.7" fill="#1f77b4"/><circle cx="1176.4" cy="771.5" r="3.7" fill="#1f77b4"/><circle cx="1203.7" cy="771.5" r="3.7" fill="#1f77b4"/><circle cx="1230.9" cy="817.9" r="3.7" fill="#1f77b4"/><line x1="1067.7" y1="781" x2="1067.7" y2="792.7" stroke="#ff7f0e" stroke-width="2.6"/><line x1="1095.2" y1="728.9" x2="1095.2" y2="768.6" stroke="#ff7f0e" stroke-width="2.6"/><line x1="1122.2" y1="736.7" x2="1122.2" y2="788.9" stroke="#ff7f0e" stroke-width="2.6"/><path d="M1067.70 786.30 L1095.20 750.00 L1122.20 762.80 L1149.20 817.90 L1176.40 817.90 L1203.70 817.90 L1230.90 817.90 L1258.20 817.90" fill="none" stroke="#ff7f0e" stroke-width="2.6" stroke-linejoin="round"/><circle cx="1067.7" cy="786.3" r="3.7" fill="#ff7f0e"/><circle cx="1095.2" cy="750" r="3.7" fill="#ff7f0e"/><circle cx="1122.2" cy="762.8" r="3.7" fill="#ff7f0e"/><circle cx="1149.2" cy="817.9" r="3.7" fill="#ff7f0e"/><circle cx="1176.4" cy="817.9" r="3.7" fill="#ff7f0e"/><circle cx="1203.7" cy="817.9" r="3.7" fill="#ff7f0e"/><circle cx="1230.9" cy="817.9" r="3.7" fill="#ff7f0e"/><circle cx="1258.2" cy="817.9" r="3.7" fill="#ff7f0e"/><rect x="1054.6" y="622.3" width="216.9000000000001" height="204.9000000000001" fill="none" stroke="#555" stroke-width="1.1"/><text x="1163.4" y="849.3000000000001" text-anchor="middle" font-size="8.6" fill="#4a4a4a">parch</text><text x="1032.6" y="726" text-anchor="middle" font-size="8.6" fill="#4a4a4a" transform="rotate(-90 1032.6 726)">survived</text><rect x="1215.6" y="626.5" width="51.600000000000136" height="35.700000000000045" rx="1.5" fill="#ffffff" fill-opacity="0.8" stroke="#d6d6d6" stroke-width="0.8"/><text x="1241.4" y="635.5" text-anchor="middle" font-size="8.3" fill="#4a4a4a">sex</text><circle cx="1225.7" cy="644.0" r="3.4" fill="#1f77b4"/><circle cx="1225.7" cy="655.5" r="3.4" fill="#ff7f0e"/><text x="1240.6" y="647.0" font-size="8.3" fill="#4a4a4a">female</text><text x="1240.6" y="658.5" font-size="8.3" fill="#4a4a4a">male</text><line x1="1312.6" y1="630.3" x2="1315.6" y2="630.3" stroke="#444" stroke-width="1"/><text x="1311.1" y="633.4" text-anchor="end" font-size="8.6" fill="#4a4a4a">1.0</text><line x1="1312.6" y1="671.62" x2="1315.6" y2="671.62" stroke="#444" stroke-width="1"/><text x="1311.1" y="674.72" text-anchor="end" font-size="8.6" fill="#4a4a4a">0.8</text><line x1="1312.6" y1="712.9399999999999" x2="1315.6" y2="712.9399999999999" stroke="#444" stroke-width="1"/><text x="1311.1" y="716.04" text-anchor="end" font-size="8.6" fill="#4a4a4a">0.6</text><line x1="1312.6" y1="754.26" x2="1315.6" y2="754.26" stroke="#444" stroke-width="1"/><text x="1311.1" y="757.36" text-anchor="end" font-size="8.6" fill="#4a4a4a">0.4</text><line x1="1312.6" y1="795.5799999999999" x2="1315.6" y2="795.5799999999999" stroke="#444" stroke-width="1"/><text x="1311.1" y="798.68" text-anchor="end" font-size="8.6" fill="#4a4a4a">0.2</text><line x1="1351" y1="827.2" x2="1351" y2="830.2" stroke="#444" stroke-width="1"/><text x="1351" y="839.0" text-anchor="middle" font-size="8.6" fill="#4a4a4a">1</text><line x1="1423.4" y1="827.2" x2="1423.4" y2="830.2" stroke="#444" stroke-width="1"/><text x="1423.4" y="839.0" text-anchor="middle" font-size="8.6" fill="#4a4a4a">2</text><line x1="1496.2" y1="827.2" x2="1496.2" y2="830.2" stroke="#444" stroke-width="1"/><text x="1496.2" y="839.0" text-anchor="middle" font-size="8.6" fill="#4a4a4a">3</text><line x1="1351" y1="630.9" x2="1351" y2="645.7" stroke="#1f77b4" stroke-width="2.6"/><line x1="1423.4" y1="641" x2="1423.4" y2="668.6" stroke="#1f77b4" stroke-width="2.6"/><line x1="1496.2" y1="720.2" x2="1496.2" y2="750" stroke="#1f77b4" stroke-width="2.6"/><path d="M1351.00 637.50 L1423.40 654.40 L1496.20 735.50" fill="none" stroke="#1f77b4" stroke-width="2.6" stroke-linejoin="round"/><circle cx="1351" cy="637.5" r="3.7" fill="#1f77b4"/><circle cx="1423.4" cy="654.4" r="3.7" fill="#1f77b4"/><circle cx="1496.2" cy="735.5" r="3.7" fill="#1f77b4"/><line x1="1351" y1="751.2" x2="1351" y2="783.1" stroke="#ff7f0e" stroke-width="2.6"/><line x1="1423.4" y1="795.6" x2="1423.4" y2="818.8" stroke="#ff7f0e" stroke-width="2.6"/><line x1="1496.2" y1="798.5" x2="1496.2" y2="813" stroke="#ff7f0e" stroke-width="2.6"/><path d="M1351.00 767.10 L1423.40 807.20 L1496.20 805.70" fill="none" stroke="#ff7f0e" stroke-width="2.6" stroke-linejoin="round"/><circle cx="1351" cy="767.1" r="3.7" fill="#ff7f0e"/><circle cx="1423.4" cy="807.2" r="3.7" fill="#ff7f0e"/><circle cx="1496.2" cy="805.7" r="3.7" fill="#ff7f0e"/><rect x="1315.6" y="622.3" width="216.9000000000001" height="204.9000000000001" fill="none" stroke="#555" stroke-width="1.1"/><text x="1423.4" y="849.3000000000001" text-anchor="middle" font-size="8.6" fill="#4a4a4a">pclass</text><text x="1293.5" y="726" text-anchor="middle" font-size="8.6" fill="#4a4a4a" transform="rotate(-90 1293.5 726)">survived</text><rect x="1475" y="626.5" width="53.700000000000045" height="35.700000000000045" rx="1.5" fill="#ffffff" fill-opacity="0.8" stroke="#d6d6d6" stroke-width="0.8"/><text x="1501.85" y="635.5" text-anchor="middle" font-size="8.3" fill="#4a4a4a">sex</text><circle cx="1485.8" cy="644.0" r="3.4" fill="#1f77b4"/><circle cx="1485.8" cy="655.5" r="3.4" fill="#ff7f0e"/><text x="1500" y="647.0" font-size="8.3" fill="#4a4a4a">female</text><text x="1500" y="658.5" font-size="8.3" fill="#4a4a4a">male</text><line x1="1572.8" y1="649.8" x2="1575.8" y2="649.8" stroke="#444" stroke-width="1"/><text x="1571.3" y="652.9" text-anchor="end" font-size="8.6" fill="#4a4a4a">500</text><line x1="1572.8" y1="680.6999999999999" x2="1575.8" y2="680.6999999999999" stroke="#444" stroke-width="1"/><text x="1571.3" y="683.8" text-anchor="end" font-size="8.6" fill="#4a4a4a">400</text><line x1="1572.8" y1="711.5999999999999" x2="1575.8" y2="711.5999999999999" stroke="#444" stroke-width="1"/><text x="1571.3" y="714.6999999999999" text-anchor="end" font-size="8.6" fill="#4a4a4a">300</text><line x1="1572.8" y1="742.5" x2="1575.8" y2="742.5" stroke="#444" stroke-width="1"/><text x="1571.3" y="745.6" text-anchor="end" font-size="8.6" fill="#4a4a4a">200</text><line x1="1572.8" y1="773.4" x2="1575.8" y2="773.4" stroke="#444" stroke-width="1"/><text x="1571.3" y="776.5" text-anchor="end" font-size="8.6" fill="#4a4a4a">100</text><line x1="1572.8" y1="804.3" x2="1575.8" y2="804.3" stroke="#444" stroke-width="1"/><text x="1571.3" y="807.4" text-anchor="end" font-size="8.6" fill="#4a4a4a">0</text><path d="M1609.10 728.90 L1609.10 729.40 L1609.10 729.90 L1609.10 730.40 L1609.10 730.90 L1609.10 731.40 L1609.10 731.90 L1609.10 732.40 L1609.10 732.91 L1609.10 733.41 L1609.11 733.91 L1609.11 734.41 L1609.11 734.91 L1609.11 735.41 L1609.11 735.91 L1609.11 736.41 L1609.12 736.91 L1609.12 737.41 L1609.12 737.91 L1609.12 738.41 L1609.13 738.91 L1609.13 739.41 L1609.13 739.91 L1609.13 740.41 L1609.14 740.92 L1609.14 741.42 L1609.14 741.92 L1609.15 742.42 L1609.15 742.92 L1609.16 743.42 L1609.16 743.92 L1609.16 744.42 L1609.17 744.92 L1609.17 745.42 L1609.18 745.92 L1609.18 746.42 L1609.19 746.92 L1609.19 747.42 L1609.20 747.92 L1609.21 748.42 L1609.23 748.93 L1609.26 749.43 L1609.30 749.93 L1609.35 750.43 L1609.39 750.93 L1609.44 751.43 L1609.48 751.93 L1609.52 752.43 L1609.56 752.93 L1609.58 753.43 L1609.60 753.93 L1609.60 754.43 L1609.58 754.93 L1609.55 755.43 L1609.51 755.93 L1609.47 756.43 L1609.42 756.94 L1609.37 757.44 L1609.32 757.94 L1609.27 758.44 L1609.24 758.94 L1609.21 759.44 L1609.20 759.94 L1609.20 760.44 L1609.20 760.94 L1609.20 761.44 L1609.20 761.94 L1609.20 762.44 L1609.20 762.94 L1609.20 763.44 L1609.20 763.94 L1609.21 764.44 L1609.21 764.95 L1609.21 765.45 L1609.21 765.95 L1609.21 766.45 L1609.21 766.95 L1609.22 767.45 L1609.22 767.95 L1609.22 768.45 L1609.22 768.95 L1609.23 769.45 L1609.23 769.95 L1609.23 770.45 L1609.24 770.95 L1609.24 771.45 L1609.25 771.95 L1609.25 772.45 L1609.25 772.96 L1609.26 773.46 L1609.26 773.96 L1609.27 774.46 L1609.28 774.96 L1609.28 775.46 L1609.29 775.96 L1609.29 776.46 L1609.30 776.96 L1609.32 777.46 L1609.36 777.96 L1609.42 778.46 L1609.50 778.96 L1609.58 779.46 L1609.66 779.96 L1609.75 780.46 L1609.83 780.97 L1609.91 781.47 L1609.98 781.97 L1610.04 782.47 L1610.10 782.97 L1610.16 783.47 L1610.22 783.97 L1610.29 784.47 L1610.37 784.97 L1610.47 785.47 L1610.57 785.97 L1610.70 786.47 L1610.87 786.97 L1611.21 787.47 L1611.74 787.97 L1612.40 788.47 L1613.14 788.98 L1613.92 789.48 L1614.69 789.98 L1615.41 790.48 L1616.11 790.98 L1616.84 791.48 L1617.59 791.98 L1618.35 792.48 L1619.13 792.98 L1619.91 793.48 L1620.69 793.98 L1621.46 794.48 L1622.23 794.98 L1623.08 795.48 L1624.04 795.98 L1625.05 796.48 L1626.06 796.99 L1627.00 797.49 L1627.83 797.99 L1628.50 798.49 L1628.94 798.99 L1629.10 799.49 L1628.90 799.99 L1628.33 800.49 L1627.46 800.99 L1626.36 801.49 L1625.10 801.99 L1623.74 802.49 L1622.36 802.99 L1621.03 803.49 L1619.81 803.99 L1618.66 804.49 L1617.49 805.00 L1616.28 805.50 L1615.05 806.00 L1613.79 806.50 L1612.50 807.00 L1611.19 807.50 L1609.86 808.00 L1608.50 808.50 L1608.50 808.50 L1607.14 808.00 L1605.81 807.50 L1604.50 807.00 L1603.21 806.50 L1601.95 806.00 L1600.72 805.50 L1599.51 805.00 L1598.34 804.49 L1597.19 803.99 L1595.97 803.49 L1594.64 802.99 L1593.26 802.49 L1591.90 801.99 L1590.64 801.49 L1589.54 800.99 L1588.67 800.49 L1588.10 799.99 L1587.90 799.49 L1588.06 798.99 L1588.50 798.49 L1589.17 797.99 L1590.00 797.49 L1590.94 796.99 L1591.95 796.48 L1592.96 795.98 L1593.92 795.48 L1594.77 794.98 L1595.54 794.48 L1596.31 793.98 L1597.09 793.48 L1597.87 792.98 L1598.65 792.48 L1599.41 791.98 L1600.16 791.48 L1600.89 790.98 L1601.59 790.48 L1602.31 789.98 L1603.08 789.48 L1603.86 788.98 L1604.60 788.47 L1605.26 787.97 L1605.79 787.47 L1606.13 786.97 L1606.30 786.47 L1606.43 785.97 L1606.53 785.47 L1606.63 784.97 L1606.71 784.47 L1606.78 783.97 L1606.84 783.47 L1606.90 782.97 L1606.96 782.47 L1607.02 781.97 L1607.09 781.47 L1607.17 780.97 L1607.25 780.46 L1607.34 779.96 L1607.42 779.46 L1607.50 778.96 L1607.58 778.46 L1607.64 777.96 L1607.68 777.46 L1607.70 776.96 L1607.71 776.46 L1607.71 775.96 L1607.72 775.46 L1607.72 774.96 L1607.73 774.46 L1607.74 773.96 L1607.74 773.46 L1607.75 772.96 L1607.75 772.45 L1607.75 771.95 L1607.76 771.45 L1607.76 770.95 L1607.77 770.45 L1607.77 769.95 L1607.77 769.45 L1607.78 768.95 L1607.78 768.45 L1607.78 767.95 L1607.78 767.45 L1607.79 766.95 L1607.79 766.45 L1607.79 765.95 L1607.79 765.45 L1607.79 764.95 L1607.79 764.44 L1607.80 763.94 L1607.80 763.44 L1607.80 762.94 L1607.80 762.44 L1607.80 761.94 L1607.80 761.44 L1607.80 760.94 L1607.80 760.44 L1607.80 759.94 L1607.79 759.44 L1607.76 758.94 L1607.73 758.44 L1607.68 757.94 L1607.63 757.44 L1607.58 756.94 L1607.53 756.43 L1607.49 755.93 L1607.45 755.43 L1607.42 754.93 L1607.40 754.43 L1607.40 753.93 L1607.42 753.43 L1607.44 752.93 L1607.48 752.43 L1607.52 751.93 L1607.56 751.43 L1607.61 750.93 L1607.65 750.43 L1607.70 749.93 L1607.74 749.43 L1607.77 748.93 L1607.79 748.42 L1607.80 747.92 L1607.81 747.42 L1607.81 746.92 L1607.82 746.42 L1607.82 745.92 L1607.83 745.42 L1607.83 744.92 L1607.84 744.42 L1607.84 743.92 L1607.84 743.42 L1607.85 742.92 L1607.85 742.42 L1607.86 741.92 L1607.86 741.42 L1607.86 740.92 L1607.87 740.41 L1607.87 739.91 L1607.87 739.41 L1607.87 738.91 L1607.88 738.41 L1607.88 737.91 L1607.88 737.41 L1607.88 736.91 L1607.89 736.41 L1607.89 735.91 L1607.89 735.41 L1607.89 734.91 L1607.89 734.41 L1607.89 733.91 L1607.90 733.41 L1607.90 732.91 L1607.90 732.40 L1607.90 731.90 L1607.90 731.40 L1607.90 730.90 L1607.90 730.40 L1607.90 729.90 L1607.90 729.40 L1607.90 728.90 Z" fill="#3274a1" stroke="#3f3f3f" stroke-width="1"/><line x1="1608.5" y1="788" x2="1608.5" y2="802.6" stroke="#3f3f3f" stroke-width="1"/><rect x="1606.8" y="794" width="3.4" height="8.600000000000023" fill="#3f3f3f"/><circle cx="1608.5" cy="799.5" r="1" fill="#fff"/><path d="M1652.50 717.20 L1652.50 717.78 L1652.50 718.37 L1652.50 718.95 L1652.50 719.53 L1652.50 720.12 L1652.50 720.70 L1652.50 721.28 L1652.50 721.86 L1652.50 722.45 L1652.50 723.03 L1652.50 723.61 L1652.50 724.20 L1652.50 724.78 L1652.50 725.36 L1652.51 725.95 L1652.51 726.53 L1652.51 727.11 L1652.51 727.69 L1652.51 728.28 L1652.51 728.86 L1652.51 729.44 L1652.51 730.03 L1652.51 730.61 L1652.51 731.19 L1652.52 731.78 L1652.52 732.36 L1652.52 732.94 L1652.52 733.52 L1652.52 734.11 L1652.52 734.69 L1652.52 735.27 L1652.53 735.86 L1652.53 736.44 L1652.53 737.02 L1652.53 737.61 L1652.53 738.19 L1652.54 738.77 L1652.54 739.35 L1652.54 739.94 L1652.54 740.52 L1652.55 741.10 L1652.55 741.69 L1652.55 742.27 L1652.55 742.85 L1652.56 743.44 L1652.56 744.02 L1652.56 744.60 L1652.57 745.18 L1652.57 745.77 L1652.57 746.35 L1652.58 746.93 L1652.58 747.52 L1652.58 748.10 L1652.59 748.68 L1652.59 749.27 L1652.59 749.85 L1652.60 750.43 L1652.60 751.02 L1652.61 751.60 L1652.61 752.18 L1652.62 752.76 L1652.62 753.35 L1652.62 753.93 L1652.63 754.51 L1652.63 755.10 L1652.64 755.68 L1652.64 756.26 L1652.65 756.85 L1652.65 757.43 L1652.66 758.01 L1652.66 758.59 L1652.67 759.18 L1652.68 759.76 L1652.68 760.34 L1652.69 760.93 L1652.69 761.51 L1652.70 762.09 L1652.71 762.68 L1652.71 763.26 L1652.72 763.84 L1652.73 764.42 L1652.73 765.01 L1652.74 765.59 L1652.75 766.17 L1652.75 766.76 L1652.76 767.34 L1652.77 767.92 L1652.78 768.51 L1652.78 769.09 L1652.79 769.67 L1652.80 770.25 L1652.81 770.84 L1652.82 771.42 L1652.82 772.00 L1652.83 772.59 L1652.84 773.17 L1652.85 773.75 L1652.86 774.34 L1652.87 774.92 L1652.88 775.50 L1652.89 776.08 L1652.90 776.67 L1652.91 777.25 L1652.94 777.83 L1652.98 778.42 L1653.03 779.00 L1653.09 779.58 L1653.15 780.17 L1653.22 780.75 L1653.29 781.33 L1653.36 781.92 L1653.44 782.50 L1653.52 783.08 L1653.60 783.66 L1653.69 784.25 L1653.80 784.83 L1653.91 785.41 L1654.04 786.00 L1654.18 786.58 L1654.33 787.16 L1654.51 787.75 L1654.70 788.33 L1654.94 788.91 L1655.30 789.49 L1655.79 790.08 L1656.38 790.66 L1657.07 791.24 L1657.82 791.83 L1658.62 792.41 L1659.45 792.99 L1660.38 793.58 L1661.54 794.16 L1662.86 794.74 L1664.24 795.32 L1665.61 795.91 L1666.88 796.49 L1668.07 797.07 L1669.39 797.66 L1670.75 798.24 L1672.01 798.82 L1673.02 799.41 L1673.66 799.99 L1673.74 800.57 L1672.79 801.15 L1670.93 801.74 L1668.54 802.32 L1665.97 802.90 L1663.57 803.49 L1661.71 804.07 L1660.12 804.65 L1658.54 805.24 L1657.05 805.82 L1655.70 806.40 L1654.58 806.98 L1653.74 807.57 L1653.10 808.15 L1652.55 808.73 L1652.13 809.32 L1651.90 809.90 L1651.90 809.90 L1651.67 809.32 L1651.25 808.73 L1650.70 808.15 L1650.06 807.57 L1649.22 806.98 L1648.10 806.40 L1646.75 805.82 L1645.26 805.24 L1643.68 804.65 L1642.09 804.07 L1640.23 803.49 L1637.83 802.90 L1635.26 802.32 L1632.87 801.74 L1631.01 801.15 L1630.06 800.57 L1630.14 799.99 L1630.78 799.41 L1631.79 798.82 L1633.05 798.24 L1634.41 797.66 L1635.73 797.07 L1636.92 796.49 L1638.19 795.91 L1639.56 795.32 L1640.94 794.74 L1642.26 794.16 L1643.42 793.58 L1644.35 792.99 L1645.18 792.41 L1645.98 791.83 L1646.73 791.24 L1647.42 790.66 L1648.01 790.08 L1648.50 789.49 L1648.86 788.91 L1649.10 788.33 L1649.29 787.75 L1649.47 787.16 L1649.62 786.58 L1649.76 786.00 L1649.89 785.41 L1650.00 784.83 L1650.11 784.25 L1650.20 783.66 L1650.28 783.08 L1650.36 782.50 L1650.44 781.92 L1650.51 781.33 L1650.58 780.75 L1650.65 780.17 L1650.71 779.58 L1650.77 779.00 L1650.82 778.42 L1650.86 777.83 L1650.89 777.25 L1650.90 776.67 L1650.91 776.08 L1650.92 775.50 L1650.93 774.92 L1650.94 774.34 L1650.95 773.75 L1650.96 773.17 L1650.97 772.59 L1650.98 772.00 L1650.98 771.42 L1650.99 770.84 L1651.00 770.25 L1651.01 769.67 L1651.02 769.09 L1651.02 768.51 L1651.03 767.92 L1651.04 767.34 L1651.05 766.76 L1651.05 766.17 L1651.06 765.59 L1651.07 765.01 L1651.07 764.42 L1651.08 763.84 L1651.09 763.26 L1651.09 762.68 L1651.10 762.09 L1651.11 761.51 L1651.11 760.93 L1651.12 760.34 L1651.12 759.76 L1651.13 759.18 L1651.14 758.59 L1651.14 758.01 L1651.15 757.43 L1651.15 756.85 L1651.16 756.26 L1651.16 755.68 L1651.17 755.10 L1651.17 754.51 L1651.18 753.93 L1651.18 753.35 L1651.18 752.76 L1651.19 752.18 L1651.19 751.60 L1651.20 751.02 L1651.20 750.43 L1651.21 749.85 L1651.21 749.27 L1651.21 748.68 L1651.22 748.10 L1651.22 747.52 L1651.22 746.93 L1651.23 746.35 L1651.23 745.77 L1651.23 745.18 L1651.24 744.60 L1651.24 744.02 L1651.24 743.44 L1651.25 742.85 L1651.25 742.27 L1651.25 741.69 L1651.25 741.10 L1651.26 740.52 L1651.26 739.94 L1651.26 739.35 L1651.26 738.77 L1651.27 738.19 L1651.27 737.61 L1651.27 737.02 L1651.27 736.44 L1651.27 735.86 L1651.28 735.27 L1651.28 734.69 L1651.28 734.11 L1651.28 733.52 L1651.28 732.94 L1651.28 732.36 L1651.28 731.78 L1651.29 731.19 L1651.29 730.61 L1651.29 730.03 L1651.29 729.44 L1651.29 728.86 L1651.29 728.28 L1651.29 727.69 L1651.29 727.11 L1651.29 726.53 L1651.29 725.95 L1651.30 725.36 L1651.30 724.78 L1651.30 724.20 L1651.30 723.61 L1651.30 723.03 L1651.30 722.45 L1651.30 721.86 L1651.30 721.28 L1651.30 720.70 L1651.30 720.12 L1651.30 719.53 L1651.30 718.95 L1651.30 718.37 L1651.30 717.78 L1651.30 717.20 Z" fill="#e1812c" stroke="#3f3f3f" stroke-width="1"/><line x1="1651.9" y1="787.7" x2="1651.9" y2="802.2" stroke="#3f3f3f" stroke-width="1"/><rect x="1650.2" y="794" width="3.4" height="8.200000000000045" fill="#3f3f3f"/><circle cx="1651.9" cy="800.4" r="1" fill="#fff"/><path d="M1717.70 632.50 L1717.70 633.65 L1717.70 634.80 L1717.70 635.95 L1717.70 637.10 L1717.70 638.25 L1717.70 639.41 L1717.70 640.56 L1717.70 641.71 L1717.70 642.86 L1717.70 644.01 L1717.71 645.16 L1717.71 646.31 L1717.71 647.46 L1717.71 648.61 L1717.71 649.76 L1717.71 650.92 L1717.71 652.07 L1717.72 653.22 L1717.72 654.37 L1717.72 655.52 L1717.72 656.67 L1717.73 657.82 L1717.73 658.97 L1717.73 660.12 L1717.73 661.27 L1717.74 662.42 L1717.74 663.58 L1717.74 664.73 L1717.75 665.88 L1717.75 667.03 L1717.76 668.18 L1717.76 669.33 L1717.77 670.48 L1717.77 671.63 L1717.78 672.78 L1717.78 673.93 L1717.79 675.08 L1717.79 676.24 L1717.80 677.39 L1717.80 678.54 L1717.81 679.69 L1717.82 680.84 L1717.82 681.99 L1717.83 683.14 L1717.84 684.29 L1717.85 685.44 L1717.85 686.59 L1717.86 687.75 L1717.87 688.90 L1717.88 690.05 L1717.89 691.20 L1717.90 692.35 L1717.90 693.50 L1717.91 694.65 L1717.92 695.80 L1717.93 696.95 L1717.95 698.10 L1717.96 699.25 L1717.97 700.41 L1717.98 701.56 L1717.99 702.71 L1718.00 703.86 L1718.01 705.01 L1718.03 706.16 L1718.04 707.31 L1718.05 708.46 L1718.07 709.61 L1718.08 710.76 L1718.10 711.92 L1718.13 713.07 L1718.23 714.22 L1718.36 715.37 L1718.49 716.52 L1718.58 717.67 L1718.60 718.82 L1718.60 719.97 L1718.60 721.12 L1718.60 722.27 L1718.60 723.42 L1718.60 724.58 L1718.60 725.73 L1718.60 726.88 L1718.60 728.03 L1718.57 729.18 L1718.52 730.33 L1718.46 731.48 L1718.38 732.63 L1718.29 733.78 L1718.20 734.93 L1718.11 736.08 L1718.02 737.24 L1717.95 738.39 L1717.88 739.54 L1717.83 740.69 L1717.80 741.84 L1717.80 742.99 L1717.82 744.14 L1717.87 745.29 L1717.94 746.44 L1718.02 747.59 L1718.12 748.75 L1718.24 749.90 L1718.36 751.05 L1718.50 752.20 L1718.65 753.35 L1718.80 754.50 L1718.95 755.65 L1719.12 756.80 L1719.33 757.95 L1719.57 759.10 L1719.85 760.25 L1720.16 761.41 L1720.50 762.56 L1720.87 763.71 L1721.25 764.86 L1721.66 766.01 L1722.08 767.16 L1722.52 768.31 L1723.04 769.46 L1723.63 770.61 L1724.28 771.76 L1724.95 772.92 L1725.63 774.07 L1726.29 775.22 L1726.92 776.37 L1727.57 777.52 L1728.22 778.67 L1728.88 779.82 L1729.52 780.97 L1730.15 782.12 L1730.75 783.27 L1731.32 784.42 L1731.88 785.58 L1732.48 786.73 L1733.10 787.88 L1733.72 789.03 L1734.32 790.18 L1734.88 791.33 L1735.38 792.48 L1735.79 793.63 L1736.09 794.78 L1736.26 795.93 L1736.26 797.08 L1735.78 798.24 L1734.83 799.39 L1733.57 800.54 L1732.13 801.69 L1730.67 802.84 L1729.32 803.99 L1728.10 805.14 L1726.81 806.29 L1725.48 807.44 L1724.16 808.59 L1722.89 809.75 L1721.67 810.90 L1720.49 812.05 L1719.33 813.20 L1718.20 814.35 L1717.10 815.50 L1717.10 815.50 L1716.00 814.35 L1714.87 813.20 L1713.71 812.05 L1712.53 810.90 L1711.31 809.75 L1710.04 808.59 L1708.72 807.44 L1707.39 806.29 L1706.10 805.14 L1704.88 803.99 L1703.53 802.84 L1702.07 801.69 L1700.63 800.54 L1699.37 799.39 L1698.42 798.24 L1697.94 797.08 L1697.94 795.93 L1698.11 794.78 L1698.41 793.63 L1698.82 792.48 L1699.32 791.33 L1699.88 790.18 L1700.48 789.03 L1701.10 787.88 L1701.72 786.73 L1702.32 785.58 L1702.88 784.42 L1703.45 783.27 L1704.05 782.12 L1704.68 780.97 L1705.32 779.82 L1705.98 778.67 L1706.63 777.52 L1707.28 776.37 L1707.91 775.22 L1708.57 774.07 L1709.25 772.92 L1709.92 771.76 L1710.57 770.61 L1711.16 769.46 L1711.68 768.31 L1712.12 767.16 L1712.54 766.01 L1712.95 764.86 L1713.33 763.71 L1713.70 762.56 L1714.04 761.41 L1714.35 760.25 L1714.63 759.10 L1714.87 757.95 L1715.08 756.80 L1715.25 755.65 L1715.40 754.50 L1715.55 753.35 L1715.70 752.20 L1715.84 751.05 L1715.96 749.90 L1716.08 748.75 L1716.18 747.59 L1716.26 746.44 L1716.33 745.29 L1716.38 744.14 L1716.40 742.99 L1716.40 741.84 L1716.37 740.69 L1716.32 739.54 L1716.25 738.39 L1716.18 737.24 L1716.09 736.08 L1716.00 734.93 L1715.91 733.78 L1715.82 732.63 L1715.74 731.48 L1715.68 730.33 L1715.63 729.18 L1715.60 728.03 L1715.60 726.88 L1715.60 725.73 L1715.60 724.58 L1715.60 723.42 L1715.60 722.27 L1715.60 721.12 L1715.60 719.97 L1715.60 718.82 L1715.62 717.67 L1715.71 716.52 L1715.84 715.37 L1715.97 714.22 L1716.07 713.07 L1716.10 711.92 L1716.12 710.76 L1716.13 709.61 L1716.15 708.46 L1716.16 707.31 L1716.17 706.16 L1716.19 705.01 L1716.20 703.86 L1716.21 702.71 L1716.22 701.56 L1716.23 700.41 L1716.24 699.25 L1716.25 698.10 L1716.27 696.95 L1716.28 695.80 L1716.29 694.65 L1716.30 693.50 L1716.30 692.35 L1716.31 691.20 L1716.32 690.05 L1716.33 688.90 L1716.34 687.75 L1716.35 686.59 L1716.35 685.44 L1716.36 684.29 L1716.37 683.14 L1716.38 681.99 L1716.38 680.84 L1716.39 679.69 L1716.40 678.54 L1716.40 677.39 L1716.41 676.24 L1716.41 675.08 L1716.42 673.93 L1716.42 672.78 L1716.43 671.63 L1716.43 670.48 L1716.44 669.33 L1716.44 668.18 L1716.45 667.03 L1716.45 665.88 L1716.46 664.73 L1716.46 663.58 L1716.46 662.42 L1716.47 661.27 L1716.47 660.12 L1716.47 658.97 L1716.47 657.82 L1716.48 656.67 L1716.48 655.52 L1716.48 654.37 L1716.48 653.22 L1716.49 652.07 L1716.49 650.92 L1716.49 649.76 L1716.49 648.61 L1716.49 647.46 L1716.49 646.31 L1716.49 645.16 L1716.50 644.01 L1716.50 642.86 L1716.50 641.71 L1716.50 640.56 L1716.50 639.41 L1716.50 638.25 L1716.50 637.10 L1716.50 635.95 L1716.50 634.80 L1716.50 633.65 L1716.50 632.50 Z" fill="#3274a1" stroke="#3f3f3f" stroke-width="1"/><line x1="1717.1" y1="752" x2="1717.1" y2="801.2" stroke="#3f3f3f" stroke-width="1"/><rect x="1715.3999999999999" y="778.6" width="3.4" height="22.600000000000023" fill="#3f3f3f"/><circle cx="1717.1" cy="795.9" r="1" fill="#fff"/><path d="M1760.60 631.60 L1760.60 632.77 L1760.60 633.94 L1760.60 635.11 L1760.60 636.28 L1760.60 637.46 L1760.60 638.63 L1760.60 639.80 L1760.60 640.97 L1760.60 642.14 L1760.60 643.31 L1760.60 644.48 L1760.60 645.65 L1760.60 646.82 L1760.60 647.99 L1760.60 649.17 L1760.60 650.34 L1760.60 651.51 L1760.60 652.68 L1760.60 653.85 L1760.60 655.02 L1760.60 656.19 L1760.60 657.36 L1760.60 658.53 L1760.60 659.71 L1760.61 660.88 L1760.61 662.05 L1760.61 663.22 L1760.61 664.39 L1760.61 665.56 L1760.61 666.73 L1760.61 667.90 L1760.61 669.07 L1760.61 670.25 L1760.61 671.42 L1760.61 672.59 L1760.61 673.76 L1760.61 674.93 L1760.61 676.10 L1760.62 677.27 L1760.62 678.44 L1760.62 679.61 L1760.62 680.78 L1760.62 681.96 L1760.62 683.13 L1760.62 684.30 L1760.62 685.47 L1760.63 686.64 L1760.63 687.81 L1760.63 688.98 L1760.63 690.15 L1760.63 691.32 L1760.63 692.50 L1760.63 693.67 L1760.64 694.84 L1760.64 696.01 L1760.64 697.18 L1760.64 698.35 L1760.64 699.52 L1760.65 700.69 L1760.65 701.86 L1760.65 703.04 L1760.65 704.21 L1760.65 705.38 L1760.66 706.55 L1760.66 707.72 L1760.66 708.89 L1760.66 710.06 L1760.67 711.23 L1760.67 712.40 L1760.67 713.57 L1760.67 714.75 L1760.68 715.92 L1760.68 717.09 L1760.68 718.26 L1760.69 719.43 L1760.69 720.60 L1760.69 721.77 L1760.70 722.94 L1760.70 724.11 L1760.70 725.29 L1760.71 726.46 L1760.71 727.63 L1760.71 728.80 L1760.72 729.97 L1760.72 731.14 L1760.72 732.31 L1760.73 733.48 L1760.73 734.65 L1760.74 735.83 L1760.74 737.00 L1760.75 738.17 L1760.75 739.34 L1760.75 740.51 L1760.76 741.68 L1760.76 742.85 L1760.77 744.02 L1760.77 745.19 L1760.78 746.36 L1760.78 747.54 L1760.79 748.71 L1760.79 749.88 L1760.80 751.05 L1760.81 752.22 L1760.87 753.39 L1760.97 754.56 L1761.11 755.73 L1761.28 756.90 L1761.47 758.08 L1761.67 759.25 L1761.88 760.42 L1762.13 761.59 L1762.46 762.76 L1762.84 763.93 L1763.28 765.10 L1763.77 766.27 L1764.29 767.44 L1764.83 768.62 L1765.39 769.79 L1766.01 770.96 L1766.71 772.13 L1767.48 773.30 L1768.29 774.47 L1769.14 775.64 L1770.00 776.81 L1770.85 777.98 L1771.71 779.15 L1772.65 780.33 L1773.65 781.50 L1774.67 782.67 L1775.68 783.84 L1776.63 785.01 L1777.49 786.18 L1778.22 787.35 L1778.82 788.52 L1779.43 789.69 L1780.03 790.87 L1780.60 792.04 L1781.13 793.21 L1781.58 794.38 L1781.93 795.55 L1782.18 796.72 L1782.29 797.89 L1782.01 799.06 L1780.85 800.23 L1779.05 801.41 L1776.87 802.58 L1774.59 803.75 L1772.48 804.92 L1770.77 806.09 L1769.14 807.26 L1767.53 808.43 L1766.01 809.60 L1764.67 810.77 L1763.60 811.94 L1762.66 813.12 L1761.81 814.29 L1761.06 815.46 L1760.45 816.63 L1760.00 817.80 L1760.00 817.80 L1759.55 816.63 L1758.94 815.46 L1758.19 814.29 L1757.34 813.12 L1756.40 811.94 L1755.33 810.77 L1753.99 809.60 L1752.47 808.43 L1750.86 807.26 L1749.23 806.09 L1747.52 804.92 L1745.41 803.75 L1743.13 802.58 L1740.95 801.41 L1739.15 800.23 L1737.99 799.06 L1737.71 797.89 L1737.82 796.72 L1738.07 795.55 L1738.42 794.38 L1738.87 793.21 L1739.40 792.04 L1739.97 790.87 L1740.57 789.69 L1741.18 788.52 L1741.78 787.35 L1742.51 786.18 L1743.37 785.01 L1744.32 783.84 L1745.33 782.67 L1746.35 781.50 L1747.35 780.33 L1748.29 779.15 L1749.15 777.98 L1750.00 776.81 L1750.86 775.64 L1751.71 774.47 L1752.52 773.30 L1753.29 772.13 L1753.99 770.96 L1754.61 769.79 L1755.17 768.62 L1755.71 767.44 L1756.23 766.27 L1756.72 765.10 L1757.16 763.93 L1757.54 762.76 L1757.87 761.59 L1758.12 760.42 L1758.33 759.25 L1758.53 758.08 L1758.72 756.90 L1758.89 755.73 L1759.03 754.56 L1759.13 753.39 L1759.19 752.22 L1759.20 751.05 L1759.21 749.88 L1759.21 748.71 L1759.22 747.54 L1759.22 746.36 L1759.23 745.19 L1759.23 744.02 L1759.24 742.85 L1759.24 741.68 L1759.25 740.51 L1759.25 739.34 L1759.25 738.17 L1759.26 737.00 L1759.26 735.83 L1759.27 734.65 L1759.27 733.48 L1759.28 732.31 L1759.28 731.14 L1759.28 729.97 L1759.29 728.80 L1759.29 727.63 L1759.29 726.46 L1759.30 725.29 L1759.30 724.11 L1759.30 722.94 L1759.31 721.77 L1759.31 720.60 L1759.31 719.43 L1759.32 718.26 L1759.32 717.09 L1759.32 715.92 L1759.33 714.75 L1759.33 713.57 L1759.33 712.40 L1759.33 711.23 L1759.34 710.06 L1759.34 708.89 L1759.34 707.72 L1759.34 706.55 L1759.35 705.38 L1759.35 704.21 L1759.35 703.04 L1759.35 701.86 L1759.35 700.69 L1759.36 699.52 L1759.36 698.35 L1759.36 697.18 L1759.36 696.01 L1759.36 694.84 L1759.37 693.67 L1759.37 692.50 L1759.37 691.32 L1759.37 690.15 L1759.37 688.98 L1759.37 687.81 L1759.37 686.64 L1759.38 685.47 L1759.38 684.30 L1759.38 683.13 L1759.38 681.96 L1759.38 680.78 L1759.38 679.61 L1759.38 678.44 L1759.38 677.27 L1759.39 676.10 L1759.39 674.93 L1759.39 673.76 L1759.39 672.59 L1759.39 671.42 L1759.39 670.25 L1759.39 669.07 L1759.39 667.90 L1759.39 666.73 L1759.39 665.56 L1759.39 664.39 L1759.39 663.22 L1759.39 662.05 L1759.39 660.88 L1759.40 659.71 L1759.40 658.53 L1759.40 657.36 L1759.40 656.19 L1759.40 655.02 L1759.40 653.85 L1759.40 652.68 L1759.40 651.51 L1759.40 650.34 L1759.40 649.17 L1759.40 647.99 L1759.40 646.82 L1759.40 645.65 L1759.40 644.48 L1759.40 643.31 L1759.40 642.14 L1759.40 640.97 L1759.40 639.80 L1759.40 638.63 L1759.40 637.46 L1759.40 636.28 L1759.40 635.11 L1759.40 633.94 L1759.40 632.77 L1759.40 631.60 Z" fill="#e1812c" stroke="#3f3f3f" stroke-width="1"/><line x1="1760" y1="783.1" x2="1760" y2="802.7" stroke="#3f3f3f" stroke-width="1"/><rect x="1758.3" y="790.7" width="3.4" height="12.0" fill="#3f3f3f"/><circle cx="1760" cy="797.4" r="1" fill="#fff"/><rect x="1575.8" y="622.2" width="217.60000000000014" height="205.0999999999999" fill="none" stroke="#555" stroke-width="1.1"/><line x1="1629.7" y1="827.3" x2="1629.7" y2="830.3" stroke="#444" stroke-width="1"/><text x="1629.7" y="839.0999999999999" text-anchor="middle" font-size="8.6" fill="#4a4a4a">0</text><line x1="1738.5" y1="827.3" x2="1738.5" y2="830.3" stroke="#444" stroke-width="1"/><text x="1738.5" y="839.0999999999999" text-anchor="middle" font-size="8.6" fill="#4a4a4a">1</text><text x="1684.2" y="849.3000000000001" text-anchor="middle" font-size="8.6" fill="#4a4a4a">survived</text><text x="1550.3999999999999" y="726" text-anchor="middle" font-size="8.6" fill="#4a4a4a" transform="rotate(-90 1550.3999999999999 726)">fare</text><rect x="1735.5" y="626.3" width="53.90000000000009" height="36.0" rx="1.5" fill="#ffffff" fill-opacity="0.8" stroke="#d6d6d6" stroke-width="0.8"/><text x="1762.45" y="635.3" text-anchor="middle" font-size="8.3" fill="#4a4a4a">sex</text><rect x="1738.0" y="640.8" width="15.8" height="5.5" fill="#3274a1" stroke="#3f3f3f" stroke-width="0.6"/><rect x="1738.0" y="652.3" width="15.8" height="5.5" fill="#e1812c" stroke="#3f3f3f" stroke-width="0.6"/><text x="1759.5" y="646.8" font-size="8.3" fill="#4a4a4a">female</text><text x="1759.5" y="657.8" font-size="8.3" fill="#4a4a4a">male</text></svg>
<div class="t" style="left:61.90px;top:10.00px;font-size:20px;color:#9a9a9a;font-weight:400;font-family:'Liberation Sans';letter-spacing:-0.835px;">File</div>
<div class="t" style="left:115.20px;top:10.00px;font-size:20px;color:#9a9a9a;font-weight:400;font-family:'Liberation Sans';letter-spacing:-0.569px;">Edit</div>
<div class="t" style="left:172.50px;top:10.00px;font-size:20px;color:#9a9a9a;font-weight:400;font-family:'Liberation Sans';letter-spacing:-0.369px;">Selection</div>
<div class="t" style="left:275.00px;top:10.00px;font-size:20px;color:#9a9a9a;font-weight:400;font-family:'Liberation Sans';letter-spacing:-0.748px;">View</div>
<div class="t" style="left:338.80px;top:10.00px;font-size:20px;color:#9a9a9a;font-weight:400;font-family:'Liberation Sans';letter-spacing:-0.957px;">Go</div>
<div class="t" style="left:388.40px;top:10.00px;font-size:20px;color:#9a9a9a;font-weight:400;font-family:'Liberation Sans';letter-spacing:-0.883px;">Run</div>
<div class="t" style="left:447.20px;top:10.00px;font-size:20px;color:#9a9a9a;font-weight:400;font-family:'Liberation Sans';letter-spacing:-0.548px;">Terminal</div>
<div class="t" style="left:542.40px;top:10.00px;font-size:20px;color:#9a9a9a;font-weight:400;font-family:'Liberation Sans';letter-spacing:-0.070px;">Help</div>
<div class="t" style="left:718.50px;top:10.34px;font-size:18.3px;color:#9a9a9a;font-weight:400;font-family:'Liberation Sans';letter-spacing:-0.188px;">hello.ipynb - hello_ds - Visual Studio Code - Insiders</div>
<div class="t" style="left:42.20px;top:82.75px;font-size:15px;color:#ffffff;font-weight:700;font-family:'Liberation Sans';">1</div>
<div class="t" style="left:99.98px;top:60.85px;font-size:17px;color:#bbbbbb;font-weight:400;font-family:'Liberation Sans';transform:scaleX(0.8214);transform-origin:0 0;">EXPLORER</div>
<div class="t" style="left:99.62px;top:103.55px;font-size:17px;color:#cccccc;font-weight:700;font-family:'Liberation Sans';transform:scaleX(0.8787);transform-origin:0 0;">HELLO_DS</div>
<div class="t" style="left:154.20px;top:134.80px;font-size:20px;color:#cccccc;font-weight:400;font-family:'Liberation Sans';letter-spacing:-0.812px;">data.csv</div>
<div class="t" style="left:153.20px;top:167.80px;font-size:20px;color:#cccccc;font-weight:400;font-family:'Liberation Sans';letter-spacing:-0.090px;">hello.ipynb</div>
<div class="t" style="left:100.50px;top:1275.55px;font-size:17px;color:#cccccc;font-weight:700;font-family:'Liberation Sans';transform:scaleX(0.9358);transform-origin:0 0;">OUTLINE</div>
<div class="t" style="left:483.50px;top:59.20px;font-size:20px;color:#ffffff;font-weight:400;font-family:'Liberation Sans';letter-spacing:-0.060px;">hello.ipynb</div>
<div class="t" style="left:493.00px;top:101.50px;font-size:20px;color:#a9a9a9;font-weight:400;font-family:'Liberation Sans';letter-spacing:-0.150px;">hello.ipynb</div>
<div class="t" style="left:643.70px;top:101.50px;font-size:20px;color:#a9a9a9;font-weight:400;font-family:'Liberation Sans';letter-spacing:-0.378px;">import seaborn as sns</div>
<div class="t" style="left:481.90px;top:137.50px;font-size:20px;color:#cccccc;font-weight:400;font-family:'Liberation Sans';letter-spacing:-0.630px;">Code</div>
<div class="t" style="left:581.00px;top:137.50px;font-size:20px;color:#cccccc;font-weight:400;font-family:'Liberation Sans';letter-spacing:0.210px;">Markdown</div>
<div class="t" style="left:741.00px;top:137.50px;font-size:20px;color:#cccccc;font-weight:400;font-family:'Liberation Sans';letter-spacing:-0.588px;">Run All</div>
<div class="t" style="left:855.40px;top:137.50px;font-size:20px;color:#cccccc;font-weight:400;font-family:'Liberation Sans';letter-spacing:-0.332px;">Clear Outputs</div>
<div class="t" style="left:1028.00px;top:137.50px;font-size:20px;color:#cccccc;font-weight:400;font-family:'Liberation Sans';letter-spacing:-0.701px;">Restart</div>
<div class="t" style="left:1141.80px;top:137.50px;font-size:20px;color:#6b6b6b;font-weight:400;font-family:'Liberation Sans';letter-spacing:0.197px;">Interrupt</div>
<div class="t" style="left:1258.80px;top:142.45px;font-size:13px;color:#555555;font-weight:400;font-family:'Liberation Sans';font-family:'Liberation Serif';font-style:italic">(x)</div>
<div class="t" style="left:1286.40px;top:137.50px;font-size:20px;color:#6b6b6b;font-weight:400;font-family:'Liberation Sans';letter-spacing:-0.799px;">Variables</div>
<div class="t" style="left:1498.70px;top:137.50px;font-size:20px;color:#cccccc;font-weight:400;font-family:'Liberation Sans';letter-spacing:-0.308px;">Python 3.7.10 64-bit ('myenv': conda)</div>
<div class="t" style="left:463.30px;top:170.02px;font-size:15.5px;color:#959595;font-weight:400;font-family:'Liberation Sans';letter-spacing:2.587px;">[3]</div>
<div class="t" style="left:565.00px;top:169.00px;font-size:18px;color:#cccccc;font-weight:400;font-family:'Liberation Sans';letter-spacing:-1.107px;">0.6s</div>
<div class="t" style="left:1747.00px;top:168.70px;font-size:18px;color:#cccccc;font-weight:400;font-family:'Liberation Sans';letter-spacing:0.194px;">Python</div>
<div class="t" style="left:463.30px;top:529.03px;font-size:15.5px;color:#959595;font-weight:400;font-family:'Liberation Sans';letter-spacing:2.587px;">[4]</div>
<div class="t" style="left:565.00px;top:527.50px;font-size:18px;color:#cccccc;font-weight:400;font-family:'Liberation Sans';letter-spacing:-1.107px;">8.7s</div>
<div class="t" style="left:1747.00px;top:527.70px;font-size:18px;color:#cccccc;font-weight:400;font-family:'Liberation Sans';letter-spacing:0.194px;">Python</div>
<div class="t" style="left:468.44px;top:911.85px;font-size:17px;color:#9d9d9d;font-weight:400;font-family:'Liberation Sans';transform:scaleX(0.8579);transform-origin:0 0;">PROBLEMS</div>
<div class="t" style="left:585.60px;top:911.85px;font-size:17px;color:#9d9d9d;font-weight:400;font-family:'Liberation Sans';transform:scaleX(0.8791);transform-origin:0 0;">OUTPUT</div>
<div class="t" style="left:683.80px;top:911.85px;font-size:17px;color:#9d9d9d;font-weight:400;font-family:'Liberation Sans';transform:scaleX(0.8912);transform-origin:0 0;">TERMINAL</div>
<div class="t" style="left:796.00px;top:911.85px;font-size:17px;color:#e7e7e7;font-weight:400;font-family:'Liberation Sans';transform:scaleX(0.8326);transform-origin:0 0;">JUPYTER: VARIABLES</div>
<div class="t" style="left:981.63px;top:911.85px;font-size:17px;color:#9d9d9d;font-weight:400;font-family:'Liberation Sans';transform:scaleX(0.8675);transform-origin:0 0;">DEBUG CONSOLE</div>
<div class="t" style="left:506.20px;top:965.70px;font-size:22px;color:#cccccc;font-weight:700;font-family:'Liberation Sans';letter-spacing:-0.062px;">Name</div>
<div class="t" style="left:687.50px;top:965.70px;font-size:22px;color:#cccccc;font-weight:700;font-family:'Liberation Sans';letter-spacing:-1.093px;">Type</div>
<div class="t" style="left:866.40px;top:965.70px;font-size:22px;color:#cccccc;font-weight:700;font-family:'Liberation Sans';letter-spacing:-1.529px;">Size</div>
<div class="t" style="left:1046.60px;top:965.70px;font-size:22px;color:#cccccc;font-weight:700;font-family:'Liberation Sans';letter-spacing:-1.062px;">Value</div>
<div class="t" style="left:515.60px;top:1005.50px;font-size:20px;color:#cccccc;font-weight:400;font-family:'Liberation Sans';letter-spacing:-1.362px;">axs</div>
<div class="t" style="left:695.10px;top:1005.50px;font-size:20px;color:#cccccc;font-weight:400;font-family:'Liberation Sans';letter-spacing:0.431px;">ndarray</div>
<div class="t" style="left:874.70px;top:1005.50px;font-size:20px;color:#cccccc;font-weight:400;font-family:'Liberation Sans';letter-spacing:-0.180px;">(5,)</div>
<div class="t" style="left:1054.70px;top:1005.50px;font-size:20px;color:#cccccc;font-weight:400;font-family:'Liberation Sans';letter-spacing:0.431px;">[&lt;AxesSubplot:xlabel='survived', ylabel='age'&gt;</div>
<div class="t" style="left:515.60px;top:1042.70px;font-size:20px;color:#cccccc;font-weight:400;font-family:'Liberation Sans';letter-spacing:0.199px;">data</div>
<div class="t" style="left:695.10px;top:1042.70px;font-size:20px;color:#cccccc;font-weight:400;font-family:'Liberation Sans';letter-spacing:0.062px;">DataFrame</div>
<div class="t" style="left:874.70px;top:1042.70px;font-size:20px;color:#cccccc;font-weight:400;font-family:'Liberation Sans';letter-spacing:0.065px;">(1309, 14)</div>
<div class="t" style="left:1054.70px;top:1042.70px;font-size:20px;color:#cccccc;font-weight:400;font-family:'Liberation Sans';letter-spacing:0.327px;">pclass survived name \ 0 1 1 &lt;...&gt; NaN 1308 N</div>
<div class="t" style="left:515.60px;top:1080.50px;font-size:20px;color:#cccccc;font-weight:400;font-family:'Liberation Sans';letter-spacing:1.450px;">fig</div>
<div class="t" style="left:695.10px;top:1080.50px;font-size:20px;color:#cccccc;font-weight:400;font-family:'Liberation Sans';letter-spacing:0.247px;">Figure</div>
<div class="t" style="left:1054.70px;top:1080.50px;font-size:20px;color:#cccccc;font-weight:400;font-family:'Liberation Sans';letter-spacing:0.153px;">Figure(2160x360)</div>
<div class="t" style="left:86.80px;top:1307.40px;font-size:18px;color:#ffffff;font-weight:400;font-family:'Liberation Sans';">0</div>
<div class="t" style="left:127.00px;top:1307.40px;font-size:18px;color:#ffffff;font-weight:400;font-family:'Liberation Sans';">0</div>
<div class="t" style="left:1463.20px;top:1306.70px;font-size:18px;color:#ffffff;font-weight:400;font-family:'Liberation Sans';letter-spacing:-0.283px;">Jupyter Server: local</div>
<div class="t" style="left:1645.40px;top:1306.70px;font-size:18px;color:#ffffff;font-weight:400;font-family:'Liberation Sans';letter-spacing:-0.213px;">Cell 3 of 4</div>
</body></html>
